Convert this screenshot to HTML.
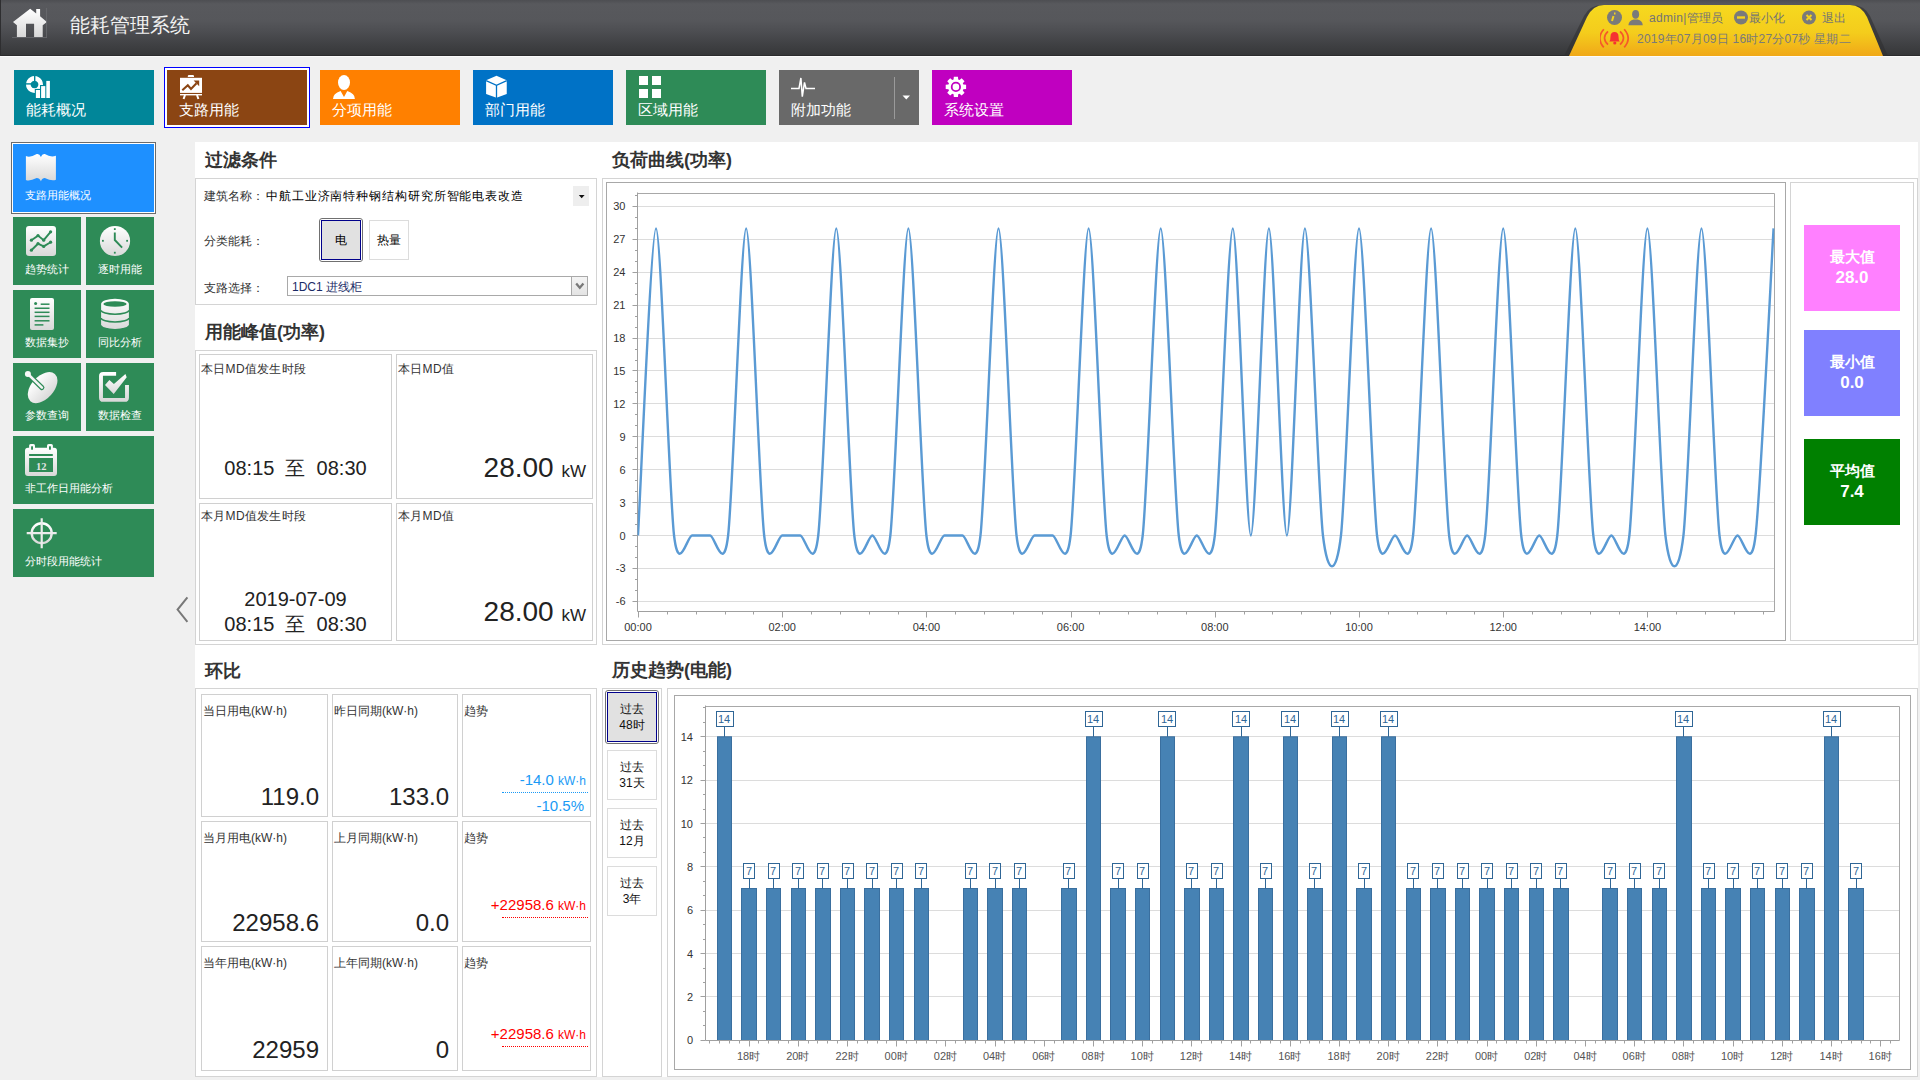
<!DOCTYPE html><html><head><meta charset="utf-8"><style>
html,body{margin:0;padding:0;width:1920px;height:1080px;overflow:hidden;background:#f0f0f0;font-family:"Liberation Sans", sans-serif;}
div{box-sizing:border-box;}
.t{position:absolute;white-space:nowrap;line-height:1;}
</style></head><body>
<div style="position:absolute;left:0px;top:0px;width:1920px;height:56px;background:linear-gradient(#4d4e52 0px,#58595d 4px,#56575b 20px,#4c4d51 32px,#3f4043 45px,#353638 56px);"></div>
<div style="position:absolute;left:0px;top:56px;width:1920px;height:1px;background:#fbfbfb;"></div>
<div style="position:absolute;left:0px;top:55px;width:1920px;height:1px;background:#2b2b2d;"></div>
<div style="position:absolute;left:0px;top:0px;width:1px;height:56px;background:#2e2e30;"></div>
<svg style="position:absolute;left:12px;top:7px" width="38" height="32" viewBox="0 0 38 32">
<defs><linearGradient id="hg" x1="0" y1="0" x2="0" y2="1"><stop offset="0" stop-color="#ffffff"/><stop offset="1" stop-color="#d8d8d8"/></linearGradient></defs>
<path d="M1,14.9 L18.2,1.85 L24.2,6.4 L24.2,2.1 L28.1,2.1 L28.1,9.36 L34.9,14.9 L30.7,18.3 L30.7,30 L22.1,30 L22.1,16.7 L14,16.7 L14,30 L4.9,30 L4.9,18.3 Z" fill="url(#hg)"/><path d="M34.5,1 L34.5,31 M0,30.5 L35,30.5" stroke="#6a6b6f" stroke-width="0.8" fill="none"/>
</svg>
<div style="position:absolute;left:70px;top:13px;white-space:nowrap;font-size:20px;color:#f2f2f2;line-height:24px;">能耗管理系统</div>
<svg style="position:absolute;left:1560px;top:0" width="340" height="56" viewBox="0 0 340 56">
<defs><linearGradient id="yg" x1="0" y1="0" x2="0" y2="1"><stop offset="0" stop-color="#f6d91f"/><stop offset="0.55" stop-color="#f4cc1c"/><stop offset="1" stop-color="#f0a818"/></linearGradient></defs>
<path d="M4,56 L24,16 Q30,5 42,5 L292,5 Q304,5 310,16 L328,56 Z" fill="#2e2f31" opacity="0.6"/>
<path d="M9,56 L27,17 Q33,5 44,5 L290,5 Q301,5 307,17 L323,56 Z" fill="url(#yg)"/>
</svg>
<svg style="position:absolute;left:1600px;top:8px" width="260" height="44" viewBox="0 0 260 44">
<circle cx="14.5" cy="9.5" r="7.5" fill="#7a7a7a"/>
<path d="M15.5,5.5 L14,5.5 M13.5,8 L12,13" stroke="#f4d21e" stroke-width="2" fill="none"/>
<ellipse cx="35.6" cy="6.3" rx="3.5" ry="4.4" fill="#7a7a7a"/>
<path d="M28.4,17.2 Q28.8,12.6 33.6,11.6 L37.6,11.6 Q42.4,12.6 42.8,17.2 Z" fill="#7a7a7a"/>
<circle cx="141" cy="9.5" r="7" fill="#7a7a7a"/>
<rect x="137" y="8.3" width="8" height="2.4" fill="#f4d21e"/>
<circle cx="209" cy="9.5" r="7" fill="#7a7a7a"/>
<path d="M206.5,7 L211.5,12 M211.5,7 L206.5,12" stroke="#f4d21e" stroke-width="2"/>
<path d="M3.8,21.2 Q-4.2,30.3 3.8,39.4 M8,23.4 Q1,30 8,36.6 M24.2,21.2 Q32.2,30.3 24.2,39.4 M20,23.4 Q27,30 20,36.6" stroke="#f6582a" stroke-width="1.7" fill="none"/>
<path d="M9.3,33.6 Q10.5,32.5 10.5,28.5 Q10.5,24 14.5,24 Q18.5,24 18.5,28.5 Q18.5,32.5 19.7,33.6 Z" fill="#f53232"/>
<circle cx="14.8" cy="35" r="1.6" fill="#f53232"/>
</svg>
<div style="position:absolute;left:1649px;top:11px;white-space:nowrap;font-size:12px;color:#747474;line-height:14px;letter-spacing:0.3px;">admin|管理员</div>
<div style="position:absolute;left:1749px;top:11px;white-space:nowrap;font-size:12px;color:#747474;line-height:14px;">最小化</div>
<div style="position:absolute;left:1822px;top:11px;white-space:nowrap;font-size:12px;color:#747474;line-height:14px;">退出</div>
<div style="position:absolute;left:1637px;top:32px;white-space:nowrap;font-size:12px;color:#7a7a7a;line-height:14px;letter-spacing:0.23px;">2019年07月09日 16时27分07秒 星期二</div>
<div style="position:absolute;left:14px;top:70px;width:140px;height:55px;background:#018699;"></div>
<div style="position:absolute;left:26px;top:101px;white-space:nowrap;font-size:15px;color:#ffffff;line-height:18px;">能耗概况</div>
<div style="position:absolute;left:164px;top:67px;width:146px;height:61px;border:1px solid #0000ff;"></div>
<div style="position:absolute;left:165px;top:68px;width:144px;height:59px;border:2px solid #ffffff;"></div>
<div style="position:absolute;left:167px;top:70px;width:140px;height:55px;background:#8B4513;"></div>
<div style="position:absolute;left:179px;top:101px;white-space:nowrap;font-size:15px;color:#ffffff;line-height:18px;">支路用能</div>
<div style="position:absolute;left:320px;top:70px;width:140px;height:55px;background:#FF8000;"></div>
<div style="position:absolute;left:332px;top:101px;white-space:nowrap;font-size:15px;color:#ffffff;line-height:18px;">分项用能</div>
<div style="position:absolute;left:473px;top:70px;width:140px;height:55px;background:#0072C6;"></div>
<div style="position:absolute;left:485px;top:101px;white-space:nowrap;font-size:15px;color:#ffffff;line-height:18px;">部门用能</div>
<div style="position:absolute;left:626px;top:70px;width:140px;height:55px;background:#2E8B57;"></div>
<div style="position:absolute;left:638px;top:101px;white-space:nowrap;font-size:15px;color:#ffffff;line-height:18px;">区域用能</div>
<div style="position:absolute;left:779px;top:70px;width:140px;height:55px;background:#696969;"></div>
<div style="position:absolute;left:791px;top:101px;white-space:nowrap;font-size:15px;color:#ffffff;line-height:18px;">附加功能</div>
<div style="position:absolute;left:932px;top:70px;width:140px;height:55px;background:#C000C0;"></div>
<div style="position:absolute;left:944px;top:101px;white-space:nowrap;font-size:15px;color:#ffffff;line-height:18px;">系统设置</div>
<svg style="position:absolute;left:25px;top:75px" width="26" height="26" viewBox="0 0 26 26"><path fill-rule="evenodd" fill="#fff" d="M9.5,1 A8.5,8.5 0 1 1 9.49,1 Z M9.5,5.7 A3.8,3.8 0 1 0 9.51,5.7 Z"/>
<rect x="9" y="0" width="1.4" height="6" fill="#018699"/><rect x="0" y="8.2" width="6" height="1.4" fill="#018699"/>
<g stroke="#018699" stroke-width="2.2" fill="#fff"><rect x="10.9" y="15" width="4.1" height="8"/><rect x="16.1" y="11.1" width="4.2" height="11.9"/><rect x="21.3" y="5.9" width="3.6" height="17.1"/></g>
<g fill="#fff"><rect x="10.9" y="15" width="4.1" height="8"/><rect x="16.1" y="11.1" width="4.2" height="11.9"/><rect x="21.3" y="5.9" width="3.6" height="17.1"/></g></svg>
<svg style="position:absolute;left:179px;top:74px" width="26" height="26" viewBox="0 0 26 26"><rect x="1" y="3.8" width="22" height="15.1" fill="#fff"/><path d="M8.8,3 L8.8,2 Q8.8,1 10,1 L13.8,1 Q15,1 15,2 L15,3 Z" fill="#fff"/>
<rect x="1" y="20" width="22" height="1.4" fill="#fff"/><path d="M6,21 L4.6,25 M18,21 L19.4,25" stroke="#fff" stroke-width="2"/>
<path d="M3.3,16.2 L8.8,11.3 L12,15 L17.5,9.2" stroke="#8B4513" stroke-width="2.1" fill="none"/><path d="M14.6,6.6 L20.2,6.6 L20.2,12.2 Z" fill="#8B4513"/></svg>
<svg style="position:absolute;left:332px;top:74px" width="26" height="26" viewBox="0 0 26 26"><ellipse cx="12" cy="8.5" rx="6" ry="7.5" fill="#fff"/><path d="M1,24.9 Q1,19.6 8.6,17.1 L12,23.1 L15.3,17.1 Q22.9,19.6 22.9,24.9 Z" fill="#fff"/></svg>
<svg style="position:absolute;left:485px;top:75px" width="26" height="26" viewBox="0 0 26 26"><path d="M11.5,0.8 L21.75,5.3 L21.75,18.9 L11.5,22.8 L1.1,18.9 L1.1,5.3 Z" fill="#fff"/>
<path d="M1.1,5.6 L11.5,10.4 L21.75,5.6 M11.5,10.4 L11.5,23" stroke="#0072C6" stroke-width="1.3" fill="none"/></svg>
<svg style="position:absolute;left:638px;top:76px" width="26" height="26" viewBox="0 0 26 26"><rect x="1" y="0" width="9" height="9" fill="#fff"/><rect x="14" y="0" width="9" height="9" fill="#fff"/><rect x="1" y="13" width="9" height="9" fill="#fff"/><rect x="14" y="13" width="9" height="9" fill="#fff"/></svg>
<svg style="position:absolute;left:790px;top:76px" width="26" height="26" viewBox="0 0 26 26"><path d="M1,12.45 L9,12.45 L10.9,2 L12.3,20.6 L14.5,6.4 L16,12.45 L25,12.45" stroke="#fff" stroke-width="1.5" fill="none" stroke-linejoin="miter"/></svg>
<svg style="position:absolute;left:944px;top:76px" width="26" height="26" viewBox="0 0 26 26"><path fill="#fff" d="M9.59,3.45 L9.83,0.71 L13.97,0.71 L14.21,3.45 L15.54,4.00 L17.65,2.23 L20.57,5.15 L18.80,7.26 L19.35,8.59 L22.09,8.83 L22.09,12.97 L19.35,13.21 L18.80,14.54 L20.57,16.65 L17.65,19.57 L15.54,17.80 L14.21,18.35 L13.97,21.09 L9.83,21.09 L9.59,18.35 L8.26,17.80 L6.15,19.57 L3.23,16.65 L5.00,14.54 L4.45,13.21 L1.71,12.97 L1.71,8.83 L4.45,8.59 L5.00,7.26 L3.23,5.15 L6.15,2.23 L8.26,4.00 Z"/><circle cx="11.9" cy="10.9" r="4.2" fill="none" stroke="#C000C0" stroke-width="1.8"/></svg>
<div style="position:absolute;left:894px;top:77px;width:1px;height:42px;background:#9a9a9a;"></div>
<svg style="position:absolute;left:902px;top:95px" width="9" height="6"><path d="M0.5,0.5 L8,0.5 L4.25,4.5 Z" fill="#fff"/></svg>
<div style="position:absolute;left:11px;top:142px;width:145px;height:72px;border:1px solid #6b6b6b;"></div>
<div style="position:absolute;left:12px;top:143px;width:143px;height:70px;border:1px solid #ffffff;"></div>
<div style="position:absolute;left:13px;top:144px;width:141px;height:68px;background:#1E90FF;"></div>
<div style="position:absolute;left:25px;top:188px;white-space:nowrap;font-size:11px;color:#fff;line-height:14px;">支路用能概况</div>
<div style="position:absolute;left:13px;top:217px;width:68px;height:68px;background:#2E8B57;"></div>
<div style="position:absolute;left:25px;top:262px;white-space:nowrap;font-size:11px;color:#fff;line-height:14px;">趋势统计</div>
<div style="position:absolute;left:86px;top:217px;width:68px;height:68px;background:#2E8B57;"></div>
<div style="position:absolute;left:98px;top:262px;white-space:nowrap;font-size:11px;color:#fff;line-height:14px;">逐时用能</div>
<div style="position:absolute;left:13px;top:290px;width:68px;height:68px;background:#2E8B57;"></div>
<div style="position:absolute;left:25px;top:335px;white-space:nowrap;font-size:11px;color:#fff;line-height:14px;">数据集抄</div>
<div style="position:absolute;left:86px;top:290px;width:68px;height:68px;background:#2E8B57;"></div>
<div style="position:absolute;left:98px;top:335px;white-space:nowrap;font-size:11px;color:#fff;line-height:14px;">同比分析</div>
<div style="position:absolute;left:13px;top:363px;width:68px;height:68px;background:#2E8B57;"></div>
<div style="position:absolute;left:25px;top:408px;white-space:nowrap;font-size:11px;color:#fff;line-height:14px;">参数查询</div>
<div style="position:absolute;left:86px;top:363px;width:68px;height:68px;background:#2E8B57;"></div>
<div style="position:absolute;left:98px;top:408px;white-space:nowrap;font-size:11px;color:#fff;line-height:14px;">数据检查</div>
<div style="position:absolute;left:13px;top:436px;width:141px;height:68px;background:#2E8B57;"></div>
<div style="position:absolute;left:25px;top:481px;white-space:nowrap;font-size:11px;color:#fff;line-height:14px;">非工作日用能分析</div>
<div style="position:absolute;left:13px;top:509px;width:141px;height:68px;background:#2E8B57;"></div>
<div style="position:absolute;left:25px;top:554px;white-space:nowrap;font-size:11px;color:#fff;line-height:14px;">分时段用能统计</div>
<svg style="position:absolute;left:20px;top:148px" width="42" height="42" viewBox="0 0 42 42"><defs><linearGradient id="book" x1="0" y1="0" x2="0" y2="1"><stop offset="0" stop-color="#ffffff"/><stop offset="1" stop-color="#d9d9d9"/></linearGradient></defs><path fill="url(#book)" d="M5.9,8 Q10,10 16.7,6.1 Q19.5,5.5 20.9,8.9 Q22.3,5.5 24.8,6.1 Q31,10 35.9,7.8 L35.9,31.7 Q32,33.5 24.8,30 Q22.3,30 20.9,33.3 Q19.5,30 16.7,30 Q9.5,33.5 5.9,31.9 Z"/></svg>
<svg style="position:absolute;left:20px;top:220px" width="42" height="42" viewBox="0 0 42 42"><defs><linearGradient id="trend" x1="0" y1="0" x2="0" y2="1"><stop offset="0" stop-color="#ffffff"/><stop offset="1" stop-color="#d9d9d9"/></linearGradient></defs><rect x="6" y="6" width="30" height="30" rx="3" fill="url(#trend)"/><path d="M11.4,20.2 L18,15.6 L23.7,20.2 L30.6,11.8 M11.4,30.2 L18,23.7 L23.7,26.4 L30.6,22.2" stroke="#2E8B57" stroke-width="1.9" fill="none"/><g fill="#2E8B57"><circle cx="11.4" cy="20.2" r="1.6"/><circle cx="18" cy="15.6" r="1.6"/><circle cx="23.7" cy="20.2" r="1.6"/><circle cx="30.6" cy="11.8" r="1.6"/><circle cx="11.4" cy="30.2" r="1.6"/><circle cx="18" cy="23.7" r="1.6"/><circle cx="23.7" cy="26.4" r="1.6"/><circle cx="30.6" cy="22.2" r="1.6"/></g></svg>
<svg style="position:absolute;left:95px;top:221px" width="42" height="42" viewBox="0 0 42 42"><defs><linearGradient id="clock" x1="0" y1="0" x2="0" y2="1"><stop offset="0" stop-color="#ffffff"/><stop offset="1" stop-color="#d9d9d9"/></linearGradient></defs><circle cx="20" cy="20" r="15.1" fill="url(#clock)"/><path d="M19.8,11.4 L19.8,19 L27.1,26.7" stroke="#2E8B57" stroke-width="1.9" fill="none"/><g fill="#2E8B57"><rect x="18.9" y="7.2" width="1.8" height="1.8"/><rect x="18.9" y="30.8" width="1.8" height="1.8"/><rect x="7" y="18.9" width="1.8" height="1.8"/><rect x="31.2" y="18.9" width="1.8" height="1.8"/></g></svg>
<svg style="position:absolute;left:20px;top:294px" width="42" height="42" viewBox="0 0 42 42"><defs><linearGradient id="doc" x1="0" y1="0" x2="0" y2="1"><stop offset="0" stop-color="#ffffff"/><stop offset="1" stop-color="#d9d9d9"/></linearGradient></defs><rect x="10" y="4" width="24" height="32" rx="2" fill="url(#doc)"/><g stroke="#2E8B57" stroke-width="1.5"><line x1="20.7" y1="10.2" x2="29.5" y2="10.2"/><line x1="14.6" y1="14.25" x2="29.5" y2="14.25"/><line x1="14.6" y1="18.3" x2="29.5" y2="18.3"/><line x1="14.6" y1="22.4" x2="29.5" y2="22.4"/><line x1="14.6" y1="26.8" x2="29.5" y2="26.8"/><line x1="14.6" y1="30.9" x2="23.4" y2="30.9"/></g><circle cx="15.6" cy="9.6" r="1.5" fill="#2E8B57"/></svg>
<svg style="position:absolute;left:95px;top:294px" width="42" height="42" viewBox="0 0 42 42"><defs><linearGradient id="db" x1="0" y1="0" x2="0" y2="1"><stop offset="0" stop-color="#ffffff"/><stop offset="1" stop-color="#d9d9d9"/></linearGradient></defs><path fill="url(#db)" d="M6.1,10 A13.9,5.2 0 0 1 33.9,10 L33.9,30.2 A13.9,4.8 0 0 1 6.1,30.2 Z"/><ellipse cx="20" cy="10" rx="11.7" ry="2.8" fill="#2E8B57"/><path d="M6.1,16.2 A13.9,4 0 0 0 33.9,16.2 M6.1,24 A13.9,4 0 0 0 33.9,24" stroke="#2E8B57" stroke-width="1.5" fill="none"/></svg>
<svg style="position:absolute;left:22px;top:366px" width="42" height="42" viewBox="0 0 42 42"><defs><linearGradient id="dish" x1="0" y1="0" x2="0" y2="1"><stop offset="0" stop-color="#ffffff"/><stop offset="1" stop-color="#d9d9d9"/></linearGradient></defs><ellipse cx="20.6" cy="21.6" rx="18.3" ry="11.2" transform="rotate(-48 20.6 21.6)" fill="url(#dish)"/><path d="M5.9,8 L19.9,21.6" stroke="#2E8B57" stroke-width="5" stroke-linecap="round"/><path d="M5.9,8 L19.9,21.6" stroke="#f4f4f4" stroke-width="2.6" stroke-linecap="round"/><circle cx="5.9" cy="8" r="3" fill="#f8f8f8"/></svg>
<svg style="position:absolute;left:95px;top:366px" width="42" height="42" viewBox="0 0 42 42"><defs><linearGradient id="chk" x1="0" y1="0" x2="0" y2="1"><stop offset="0" stop-color="#ffffff"/><stop offset="1" stop-color="#d9d9d9"/></linearGradient></defs><path d="M21.1,7.9 L8.2,7.9 Q6,7.9 6,10.1 L6,31.7 Q6,33.9 8.2,33.9 L29.8,33.9 Q32,33.9 32,31.7 L32,18.9" stroke="url(#chk)" stroke-width="3.9" fill="none"/><path fill="url(#chk)" d="M10,18.9 L14.4,14.1 L18.9,18.1 L30.4,8 L31.7,11.3 L18.7,28 Z"/><path d="M21.3,5.8 L17.6,9.9 M32.3,16.7 L29.6,19.4" stroke="#2E8B57" stroke-width="0"/></svg>
<svg style="position:absolute;left:20px;top:440px" width="42" height="42" viewBox="0 0 42 42"><defs><linearGradient id="cal" x1="0" y1="0" x2="0" y2="1"><stop offset="0" stop-color="#ffffff"/><stop offset="1" stop-color="#d9d9d9"/></linearGradient></defs><path fill="url(#cal)" fill-rule="evenodd" d="M8,7.8 L34,7.8 Q37,7.8 37,10.8 L37,32.9 Q37,35.9 34,35.9 L8,35.9 Q5,35.9 5,32.9 L5,10.8 Q5,7.8 8,7.8 Z M9.1,14.1 L32.8,14.1 L32.8,15.9 L9.1,15.9 Z M9.1,18.1 L33,18.1 L33,31.9 L9.1,31.9 Z"/><rect x="9.1" y="3.9" width="5.9" height="6.8" rx="1.6" fill="#fbfbfb"/><rect x="27" y="3.9" width="5.9" height="6.8" rx="1.6" fill="#fbfbfb"/><rect x="11.1" y="6.3" width="1.9" height="3.4" fill="#2E8B57"/><rect x="29" y="6.3" width="1.9" height="3.4" fill="#2E8B57"/><text x="21.2" y="29.8" text-anchor="middle" font-size="10.5" font-weight="bold" font-family="Liberation Serif" fill="#e4e4e4">12</text></svg>
<svg style="position:absolute;left:20px;top:512px" width="42" height="42" viewBox="0 0 42 42"><defs><linearGradient id="cross" x1="0" y1="0" x2="0" y2="1"><stop offset="0" stop-color="#ffffff"/><stop offset="1" stop-color="#d9d9d9"/></linearGradient></defs><circle cx="21.7" cy="21.2" r="10" stroke="url(#cross)" stroke-width="2.4" fill="none"/><path d="M21.7,6.2 L21.7,36.2 M6.7,21.2 L36.7,21.2" stroke="#ececec" stroke-width="2.2"/></svg>
<svg style="position:absolute;left:172px;top:594px" width="20" height="32"><path d="M15.4,3.3 L5.6,15.6 L15.4,27.8" stroke="#787878" stroke-width="2" fill="none"/></svg>
<div style="position:absolute;left:195px;top:142px;width:1723px;height:935px;background:#ffffff;"></div>
<div style="position:absolute;left:205px;top:149px;white-space:nowrap;font-size:18px;font-weight:bold;color:#333;line-height:22px;">过滤条件</div>
<div style="position:absolute;left:205px;top:321px;white-space:nowrap;font-size:18px;font-weight:bold;color:#333;line-height:22px;">用能峰值(功率)</div>
<div style="position:absolute;left:205px;top:660px;white-space:nowrap;font-size:18px;font-weight:bold;color:#333;line-height:22px;">环比</div>
<div style="position:absolute;left:612px;top:149px;white-space:nowrap;font-size:18px;font-weight:bold;color:#333;line-height:22px;">负荷曲线(功率)</div>
<div style="position:absolute;left:612px;top:659px;white-space:nowrap;font-size:18px;font-weight:bold;color:#333;line-height:22px;">历史趋势(电能)</div>
<div style="position:absolute;left:195px;top:178px;width:402px;height:127px;border:1px solid #d4d4d4;"></div>
<div style="position:absolute;left:204px;top:189px;white-space:nowrap;font-size:12px;color:#333;line-height:14px;">建筑名称：</div>
<div style="position:absolute;left:266px;top:189px;white-space:nowrap;font-size:12px;color:#000;line-height:14px;letter-spacing:0.9px;">中航工业济南特种钢结构研究所智能电表改造</div>
<div style="position:absolute;left:573px;top:186px;width:16px;height:20px;background:#eeeeee;"></div>
<svg style="position:absolute;left:578px;top:194px" width="8" height="6"><path d="M0.8,1 L6.6,1 L3.7,4.2 Z" fill="#111"/></svg>
<div style="position:absolute;left:204px;top:234px;white-space:nowrap;font-size:12px;color:#333;line-height:14px;">分类能耗：</div>
<div style="position:absolute;left:319px;top:218px;width:44px;height:44px;border:1px solid #707070;border-radius:3px;background:#fff;"></div>
<div style="position:absolute;left:321px;top:220px;width:40px;height:40px;border:1px solid #00008b;background:#e1e1e1;"></div>
<div style="position:absolute;left:319px;top:233px;white-space:nowrap;width:44px;text-align:center;font-size:12px;color:#000;line-height:14px;">电</div>
<div style="position:absolute;left:369px;top:220px;width:40px;height:40px;border:1px solid #dcdcdc;background:#fff;"></div>
<div style="position:absolute;left:369px;top:233px;white-space:nowrap;width:40px;text-align:center;font-size:12px;color:#000;line-height:14px;">热量</div>
<div style="position:absolute;left:204px;top:281px;white-space:nowrap;font-size:12px;color:#333;line-height:14px;">支路选择：</div>
<div style="position:absolute;left:287px;top:276px;width:301px;height:20px;border:1px solid #a9a9a9;background:#fff;"></div>
<div style="position:absolute;left:571px;top:277px;width:16px;height:18px;border-left:1px solid #a9a9a9;background:linear-gradient(#f4f4f4,#e4e4e4);"></div>
<svg style="position:absolute;left:575px;top:282px" width="10" height="9"><path d="M1.2,1.6 L4.8,5.8 L8.4,1.6" stroke="#787878" stroke-width="2.3" fill="none"/></svg>
<div style="position:absolute;left:292px;top:280px;white-space:nowrap;font-size:12px;color:#1a2a66;line-height:14px;">1DC1 进线柜</div>
<div style="position:absolute;left:195px;top:350px;width:402px;height:295px;border:1px solid #d4d4d4;"></div>
<div style="position:absolute;left:199px;top:354px;width:193px;height:145px;border:1px solid #d0d0d0;"></div>
<div style="position:absolute;left:396px;top:354px;width:197px;height:145px;border:1px solid #d0d0d0;"></div>
<div style="position:absolute;left:199px;top:503px;width:193px;height:138px;border:1px solid #d0d0d0;"></div>
<div style="position:absolute;left:396px;top:503px;width:197px;height:138px;border:1px solid #d0d0d0;"></div>
<div style="position:absolute;left:201px;top:362px;white-space:nowrap;font-size:12px;color:#333;line-height:14px;letter-spacing:0.3px;">本日MD值发生时段</div>
<div style="position:absolute;left:398px;top:362px;white-space:nowrap;font-size:12px;color:#333;line-height:14px;letter-spacing:0.3px;">本日MD值</div>
<div style="position:absolute;left:201px;top:509px;white-space:nowrap;font-size:12px;color:#333;line-height:14px;letter-spacing:0.3px;">本月MD值发生时段</div>
<div style="position:absolute;left:398px;top:509px;white-space:nowrap;font-size:12px;color:#333;line-height:14px;letter-spacing:0.3px;">本月MD值</div>
<div style="position:absolute;left:199px;top:457px;white-space:nowrap;width:193px;text-align:center;font-size:20px;color:#222;line-height:22px;">08:15&nbsp;&nbsp;至&nbsp;&nbsp;08:30</div>
<div style="position:absolute;left:199px;top:588px;white-space:nowrap;width:193px;text-align:center;font-size:20px;color:#222;line-height:22px;">2019-07-09</div>
<div style="position:absolute;left:199px;top:613px;white-space:nowrap;width:193px;text-align:center;font-size:20px;color:#222;line-height:22px;">08:15&nbsp;&nbsp;至&nbsp;&nbsp;08:30</div>
<div style="position:absolute;left:396px;top:453px;white-space:nowrap;width:190px;text-align:right;font-size:28px;color:#222;line-height:30px;">28.00 <span style="font-size:17px">kW</span></div>
<div style="position:absolute;left:396px;top:597px;white-space:nowrap;width:190px;text-align:right;font-size:28px;color:#222;line-height:30px;">28.00 <span style="font-size:17px">kW</span></div>
<div style="position:absolute;left:195px;top:688px;width:402px;height:389px;border:1px solid #d4d4d4;"></div>
<div style="position:absolute;left:201px;top:694px;width:127px;height:123px;border:1px solid #d0d0d0;"></div>
<div style="position:absolute;left:203px;top:704px;white-space:nowrap;font-size:12px;color:#333;line-height:14px;">当日用电(kW·h)</div>
<div style="position:absolute;left:332px;top:694px;width:126px;height:123px;border:1px solid #d0d0d0;"></div>
<div style="position:absolute;left:334px;top:704px;white-space:nowrap;font-size:12px;color:#333;line-height:14px;">昨日同期(kW·h)</div>
<div style="position:absolute;left:462px;top:694px;width:129px;height:123px;border:1px solid #d0d0d0;"></div>
<div style="position:absolute;left:464px;top:704px;white-space:nowrap;font-size:12px;color:#333;line-height:14px;">趋势</div>
<div style="position:absolute;left:201px;top:784px;white-space:nowrap;width:118px;text-align:right;font-size:24px;color:#222;line-height:26px;">119.0</div>
<div style="position:absolute;left:332px;top:784px;white-space:nowrap;width:117px;text-align:right;font-size:24px;color:#222;line-height:26px;">133.0</div>
<div style="position:absolute;left:201px;top:821px;width:127px;height:121px;border:1px solid #d0d0d0;"></div>
<div style="position:absolute;left:203px;top:831px;white-space:nowrap;font-size:12px;color:#333;line-height:14px;">当月用电(kW·h)</div>
<div style="position:absolute;left:332px;top:821px;width:126px;height:121px;border:1px solid #d0d0d0;"></div>
<div style="position:absolute;left:334px;top:831px;white-space:nowrap;font-size:12px;color:#333;line-height:14px;">上月同期(kW·h)</div>
<div style="position:absolute;left:462px;top:821px;width:129px;height:121px;border:1px solid #d0d0d0;"></div>
<div style="position:absolute;left:464px;top:831px;white-space:nowrap;font-size:12px;color:#333;line-height:14px;">趋势</div>
<div style="position:absolute;left:201px;top:910px;white-space:nowrap;width:118px;text-align:right;font-size:24px;color:#222;line-height:26px;">22958.6</div>
<div style="position:absolute;left:332px;top:910px;white-space:nowrap;width:117px;text-align:right;font-size:24px;color:#222;line-height:26px;">0.0</div>
<div style="position:absolute;left:201px;top:946px;width:127px;height:125px;border:1px solid #d0d0d0;"></div>
<div style="position:absolute;left:203px;top:956px;white-space:nowrap;font-size:12px;color:#333;line-height:14px;">当年用电(kW·h)</div>
<div style="position:absolute;left:332px;top:946px;width:126px;height:125px;border:1px solid #d0d0d0;"></div>
<div style="position:absolute;left:334px;top:956px;white-space:nowrap;font-size:12px;color:#333;line-height:14px;">上年同期(kW·h)</div>
<div style="position:absolute;left:462px;top:946px;width:129px;height:125px;border:1px solid #d0d0d0;"></div>
<div style="position:absolute;left:464px;top:956px;white-space:nowrap;font-size:12px;color:#333;line-height:14px;">趋势</div>
<div style="position:absolute;left:201px;top:1037px;white-space:nowrap;width:118px;text-align:right;font-size:24px;color:#222;line-height:26px;">22959</div>
<div style="position:absolute;left:332px;top:1037px;white-space:nowrap;width:117px;text-align:right;font-size:24px;color:#222;line-height:26px;">0</div>
<div style="position:absolute;left:462px;top:771px;white-space:nowrap;width:124px;text-align:right;font-size:15px;color:#1a9af5;line-height:17px;">-14.0 <span style="font-size:12px">kW·h</span></div>
<div style="position:absolute;left:502px;top:792px;width:86px;height:1px;border-top:1px dotted #1a9af5;"></div>
<div style="position:absolute;left:462px;top:797px;white-space:nowrap;width:122px;text-align:right;font-size:15px;color:#1a9af5;line-height:17px;">-10.5%</div>
<div style="position:absolute;left:462px;top:896px;white-space:nowrap;width:124px;text-align:right;font-size:15px;color:#ff0000;line-height:17px;">+22958.6 <span style="font-size:12px">kW·h</span></div>
<div style="position:absolute;left:502px;top:917px;width:86px;height:1px;border-top:1px dotted #ff0000;"></div>
<div style="position:absolute;left:462px;top:1025px;white-space:nowrap;width:124px;text-align:right;font-size:15px;color:#ff0000;line-height:17px;">+22958.6 <span style="font-size:12px">kW·h</span></div>
<div style="position:absolute;left:502px;top:1046px;width:86px;height:1px;border-top:1px dotted #ff0000;"></div>
<div style="position:absolute;left:602px;top:178px;width:1316px;height:467px;border:1px solid #d4d4d4;"></div>
<div style="position:absolute;left:606px;top:182px;width:1180px;height:459px;border:1px solid #a8a8a8;"></div>
<div style="position:absolute;left:1790px;top:182px;width:124px;height:459px;border:1px solid #d4d4d4;"></div>
<div style="position:absolute;left:1804px;top:225px;width:96px;height:86px;background:#FF80FF;"></div>
<div style="position:absolute;left:1804px;top:248px;white-space:nowrap;width:96px;text-align:center;font-size:15px;font-weight:bold;color:#fff;line-height:18px;">最大值</div>
<div style="position:absolute;left:1804px;top:268px;white-space:nowrap;width:96px;text-align:center;font-size:17px;font-weight:bold;color:#fff;line-height:20px;">28.0</div>
<div style="position:absolute;left:1804px;top:330px;width:96px;height:86px;background:#8080FF;"></div>
<div style="position:absolute;left:1804px;top:353px;white-space:nowrap;width:96px;text-align:center;font-size:15px;font-weight:bold;color:#fff;line-height:18px;">最小值</div>
<div style="position:absolute;left:1804px;top:373px;white-space:nowrap;width:96px;text-align:center;font-size:17px;font-weight:bold;color:#fff;line-height:20px;">0.0</div>
<div style="position:absolute;left:1804px;top:439px;width:96px;height:86px;background:#008000;"></div>
<div style="position:absolute;left:1804px;top:462px;white-space:nowrap;width:96px;text-align:center;font-size:15px;font-weight:bold;color:#fff;line-height:18px;">平均值</div>
<div style="position:absolute;left:1804px;top:482px;white-space:nowrap;width:96px;text-align:center;font-size:17px;font-weight:bold;color:#fff;line-height:20px;">7.4</div>
<svg style="position:absolute;left:0;top:0" width="1920" height="1080" viewBox="0 0 1920 1080">
<line x1="637.5" y1="601.5" x2="1774.5" y2="601.5" stroke="#dcdcdc" stroke-width="1"/>
<line x1="637.5" y1="568.5" x2="1774.5" y2="568.5" stroke="#dcdcdc" stroke-width="1"/>
<line x1="637.5" y1="535.5" x2="1774.5" y2="535.5" stroke="#dcdcdc" stroke-width="1"/>
<line x1="637.5" y1="502.5" x2="1774.5" y2="502.5" stroke="#dcdcdc" stroke-width="1"/>
<line x1="637.5" y1="469.5" x2="1774.5" y2="469.5" stroke="#dcdcdc" stroke-width="1"/>
<line x1="637.5" y1="436.5" x2="1774.5" y2="436.5" stroke="#dcdcdc" stroke-width="1"/>
<line x1="637.5" y1="403.5" x2="1774.5" y2="403.5" stroke="#dcdcdc" stroke-width="1"/>
<line x1="637.5" y1="370.5" x2="1774.5" y2="370.5" stroke="#dcdcdc" stroke-width="1"/>
<line x1="637.5" y1="338.5" x2="1774.5" y2="338.5" stroke="#dcdcdc" stroke-width="1"/>
<line x1="637.5" y1="305.5" x2="1774.5" y2="305.5" stroke="#dcdcdc" stroke-width="1"/>
<line x1="637.5" y1="272.5" x2="1774.5" y2="272.5" stroke="#dcdcdc" stroke-width="1"/>
<line x1="637.5" y1="239.5" x2="1774.5" y2="239.5" stroke="#dcdcdc" stroke-width="1"/>
<line x1="637.5" y1="206.5" x2="1774.5" y2="206.5" stroke="#dcdcdc" stroke-width="1"/>
<path d="M637.5,193.5 L1774.5,193.5 L1774.5,611.5" stroke="#a8a8a8" fill="none"/>
<path d="M637.5,192.5 L637.5,611.5 L1774.5,611.5" stroke="#a0a0a0" fill="none"/>
<line x1="632.5" y1="601.5" x2="637.5" y2="601.5" stroke="#a0a0a0"/>
<line x1="635.0" y1="590.5" x2="637.5" y2="590.5" stroke="#a0a0a0"/>
<line x1="635.0" y1="579.5" x2="637.5" y2="579.5" stroke="#a0a0a0"/>
<line x1="632.5" y1="568.5" x2="637.5" y2="568.5" stroke="#a0a0a0"/>
<line x1="635.0" y1="557.5" x2="637.5" y2="557.5" stroke="#a0a0a0"/>
<line x1="635.0" y1="546.5" x2="637.5" y2="546.5" stroke="#a0a0a0"/>
<line x1="632.5" y1="535.5" x2="637.5" y2="535.5" stroke="#a0a0a0"/>
<line x1="635.0" y1="524.5" x2="637.5" y2="524.5" stroke="#a0a0a0"/>
<line x1="635.0" y1="513.5" x2="637.5" y2="513.5" stroke="#a0a0a0"/>
<line x1="632.5" y1="502.5" x2="637.5" y2="502.5" stroke="#a0a0a0"/>
<line x1="635.0" y1="491.5" x2="637.5" y2="491.5" stroke="#a0a0a0"/>
<line x1="635.0" y1="480.5" x2="637.5" y2="480.5" stroke="#a0a0a0"/>
<line x1="632.5" y1="469.5" x2="637.5" y2="469.5" stroke="#a0a0a0"/>
<line x1="635.0" y1="458.5" x2="637.5" y2="458.5" stroke="#a0a0a0"/>
<line x1="635.0" y1="447.5" x2="637.5" y2="447.5" stroke="#a0a0a0"/>
<line x1="632.5" y1="436.5" x2="637.5" y2="436.5" stroke="#a0a0a0"/>
<line x1="635.0" y1="425.5" x2="637.5" y2="425.5" stroke="#a0a0a0"/>
<line x1="635.0" y1="414.5" x2="637.5" y2="414.5" stroke="#a0a0a0"/>
<line x1="632.5" y1="403.5" x2="637.5" y2="403.5" stroke="#a0a0a0"/>
<line x1="635.0" y1="392.5" x2="637.5" y2="392.5" stroke="#a0a0a0"/>
<line x1="635.0" y1="381.5" x2="637.5" y2="381.5" stroke="#a0a0a0"/>
<line x1="632.5" y1="370.5" x2="637.5" y2="370.5" stroke="#a0a0a0"/>
<line x1="635.0" y1="360.5" x2="637.5" y2="360.5" stroke="#a0a0a0"/>
<line x1="635.0" y1="349.5" x2="637.5" y2="349.5" stroke="#a0a0a0"/>
<line x1="632.5" y1="338.5" x2="637.5" y2="338.5" stroke="#a0a0a0"/>
<line x1="635.0" y1="327.5" x2="637.5" y2="327.5" stroke="#a0a0a0"/>
<line x1="635.0" y1="316.5" x2="637.5" y2="316.5" stroke="#a0a0a0"/>
<line x1="632.5" y1="305.5" x2="637.5" y2="305.5" stroke="#a0a0a0"/>
<line x1="635.0" y1="294.5" x2="637.5" y2="294.5" stroke="#a0a0a0"/>
<line x1="635.0" y1="283.5" x2="637.5" y2="283.5" stroke="#a0a0a0"/>
<line x1="632.5" y1="272.5" x2="637.5" y2="272.5" stroke="#a0a0a0"/>
<line x1="635.0" y1="261.5" x2="637.5" y2="261.5" stroke="#a0a0a0"/>
<line x1="635.0" y1="250.5" x2="637.5" y2="250.5" stroke="#a0a0a0"/>
<line x1="632.5" y1="239.5" x2="637.5" y2="239.5" stroke="#a0a0a0"/>
<line x1="635.0" y1="228.5" x2="637.5" y2="228.5" stroke="#a0a0a0"/>
<line x1="635.0" y1="217.5" x2="637.5" y2="217.5" stroke="#a0a0a0"/>
<line x1="632.5" y1="206.5" x2="637.5" y2="206.5" stroke="#a0a0a0"/>
<line x1="635.0" y1="195.5" x2="637.5" y2="195.5" stroke="#a0a0a0"/>
<text x="625.5" y="605.302" text-anchor="end" font-size="11" fill="#333" font-family="Liberation Sans">-6</text>
<text x="625.5" y="572.401" text-anchor="end" font-size="11" fill="#333" font-family="Liberation Sans">-3</text>
<text x="625.5" y="539.5" text-anchor="end" font-size="11" fill="#333" font-family="Liberation Sans">0</text>
<text x="625.5" y="506.599" text-anchor="end" font-size="11" fill="#333" font-family="Liberation Sans">3</text>
<text x="625.5" y="473.698" text-anchor="end" font-size="11" fill="#333" font-family="Liberation Sans">6</text>
<text x="625.5" y="440.797" text-anchor="end" font-size="11" fill="#333" font-family="Liberation Sans">9</text>
<text x="625.5" y="407.89599999999996" text-anchor="end" font-size="11" fill="#333" font-family="Liberation Sans">12</text>
<text x="625.5" y="374.995" text-anchor="end" font-size="11" fill="#333" font-family="Liberation Sans">15</text>
<text x="625.5" y="342.094" text-anchor="end" font-size="11" fill="#333" font-family="Liberation Sans">18</text>
<text x="625.5" y="309.193" text-anchor="end" font-size="11" fill="#333" font-family="Liberation Sans">21</text>
<text x="625.5" y="276.292" text-anchor="end" font-size="11" fill="#333" font-family="Liberation Sans">24</text>
<text x="625.5" y="243.39099999999996" text-anchor="end" font-size="11" fill="#333" font-family="Liberation Sans">27</text>
<text x="625.5" y="210.49" text-anchor="end" font-size="11" fill="#333" font-family="Liberation Sans">30</text>
<line x1="638.5" y1="611.5" x2="638.5" y2="617.5" stroke="#a0a0a0"/>
<text x="638.0" y="631" text-anchor="middle" font-size="11" fill="#333" font-family="Liberation Sans">00:00</text>
<line x1="667.5" y1="611.5" x2="667.5" y2="614.5" stroke="#a0a0a0"/>
<line x1="696.5" y1="611.5" x2="696.5" y2="614.5" stroke="#a0a0a0"/>
<line x1="725.5" y1="611.5" x2="725.5" y2="614.5" stroke="#a0a0a0"/>
<line x1="753.5" y1="611.5" x2="753.5" y2="614.5" stroke="#a0a0a0"/>
<line x1="782.5" y1="611.5" x2="782.5" y2="617.5" stroke="#a0a0a0"/>
<text x="782.2" y="631" text-anchor="middle" font-size="11" fill="#333" font-family="Liberation Sans">02:00</text>
<line x1="811.5" y1="611.5" x2="811.5" y2="614.5" stroke="#a0a0a0"/>
<line x1="840.5" y1="611.5" x2="840.5" y2="614.5" stroke="#a0a0a0"/>
<line x1="869.5" y1="611.5" x2="869.5" y2="614.5" stroke="#a0a0a0"/>
<line x1="898.5" y1="611.5" x2="898.5" y2="614.5" stroke="#a0a0a0"/>
<line x1="926.5" y1="611.5" x2="926.5" y2="617.5" stroke="#a0a0a0"/>
<text x="926.4000000000001" y="631" text-anchor="middle" font-size="11" fill="#333" font-family="Liberation Sans">04:00</text>
<line x1="955.5" y1="611.5" x2="955.5" y2="614.5" stroke="#a0a0a0"/>
<line x1="984.5" y1="611.5" x2="984.5" y2="614.5" stroke="#a0a0a0"/>
<line x1="1013.5" y1="611.5" x2="1013.5" y2="614.5" stroke="#a0a0a0"/>
<line x1="1042.5" y1="611.5" x2="1042.5" y2="614.5" stroke="#a0a0a0"/>
<line x1="1071.5" y1="611.5" x2="1071.5" y2="617.5" stroke="#a0a0a0"/>
<text x="1070.6" y="631" text-anchor="middle" font-size="11" fill="#333" font-family="Liberation Sans">06:00</text>
<line x1="1099.5" y1="611.5" x2="1099.5" y2="614.5" stroke="#a0a0a0"/>
<line x1="1128.5" y1="611.5" x2="1128.5" y2="614.5" stroke="#a0a0a0"/>
<line x1="1157.5" y1="611.5" x2="1157.5" y2="614.5" stroke="#a0a0a0"/>
<line x1="1186.5" y1="611.5" x2="1186.5" y2="614.5" stroke="#a0a0a0"/>
<line x1="1215.5" y1="611.5" x2="1215.5" y2="617.5" stroke="#a0a0a0"/>
<text x="1214.8000000000002" y="631" text-anchor="middle" font-size="11" fill="#333" font-family="Liberation Sans">08:00</text>
<line x1="1244.5" y1="611.5" x2="1244.5" y2="614.5" stroke="#a0a0a0"/>
<line x1="1272.5" y1="611.5" x2="1272.5" y2="614.5" stroke="#a0a0a0"/>
<line x1="1301.5" y1="611.5" x2="1301.5" y2="614.5" stroke="#a0a0a0"/>
<line x1="1330.5" y1="611.5" x2="1330.5" y2="614.5" stroke="#a0a0a0"/>
<line x1="1359.5" y1="611.5" x2="1359.5" y2="617.5" stroke="#a0a0a0"/>
<text x="1359.0" y="631" text-anchor="middle" font-size="11" fill="#333" font-family="Liberation Sans">10:00</text>
<line x1="1388.5" y1="611.5" x2="1388.5" y2="614.5" stroke="#a0a0a0"/>
<line x1="1417.5" y1="611.5" x2="1417.5" y2="614.5" stroke="#a0a0a0"/>
<line x1="1446.5" y1="611.5" x2="1446.5" y2="614.5" stroke="#a0a0a0"/>
<line x1="1474.5" y1="611.5" x2="1474.5" y2="614.5" stroke="#a0a0a0"/>
<line x1="1503.5" y1="611.5" x2="1503.5" y2="617.5" stroke="#a0a0a0"/>
<text x="1503.2" y="631" text-anchor="middle" font-size="11" fill="#333" font-family="Liberation Sans">12:00</text>
<line x1="1532.5" y1="611.5" x2="1532.5" y2="614.5" stroke="#a0a0a0"/>
<line x1="1561.5" y1="611.5" x2="1561.5" y2="614.5" stroke="#a0a0a0"/>
<line x1="1590.5" y1="611.5" x2="1590.5" y2="614.5" stroke="#a0a0a0"/>
<line x1="1619.5" y1="611.5" x2="1619.5" y2="614.5" stroke="#a0a0a0"/>
<line x1="1647.5" y1="611.5" x2="1647.5" y2="617.5" stroke="#a0a0a0"/>
<text x="1647.4" y="631" text-anchor="middle" font-size="11" fill="#333" font-family="Liberation Sans">14:00</text>
<line x1="1676.5" y1="611.5" x2="1676.5" y2="614.5" stroke="#a0a0a0"/>
<line x1="1705.5" y1="611.5" x2="1705.5" y2="614.5" stroke="#a0a0a0"/>
<line x1="1734.5" y1="611.5" x2="1734.5" y2="614.5" stroke="#a0a0a0"/>
<line x1="1763.5" y1="611.5" x2="1763.5" y2="614.5" stroke="#a0a0a0"/>
<clipPath id="lcclip"><rect x="637.5" y="193.5" width="1137.0" height="418.0"/></clipPath>
<path d="M638.00,535.50 C640.40,494.56 651.22,228.42 656.02,228.42 C660.83,228.42 669.24,494.56 674.05,535.50 C678.86,576.44 687.27,535.50 692.08,535.50 C696.88,535.50 705.29,535.50 710.10,535.50 C714.91,535.50 723.32,576.44 728.12,535.50 C732.93,494.56 741.34,228.42 746.15,228.42 C750.96,228.42 759.37,494.56 764.17,535.50 C768.98,576.44 777.39,535.50 782.20,535.50 C787.01,535.50 795.42,535.50 800.23,535.50 C805.03,535.50 813.44,576.44 818.25,535.50 C823.06,494.56 831.47,228.42 836.27,228.42 C841.08,228.42 849.49,494.56 854.30,535.50 C859.11,576.44 867.52,535.50 872.33,535.50 C877.13,535.50 885.54,576.44 890.35,535.50 C895.16,494.56 903.57,228.42 908.38,228.42 C913.18,228.42 921.59,494.56 926.40,535.50 C931.21,576.44 939.62,535.50 944.42,535.50 C949.23,535.50 957.64,535.50 962.45,535.50 C967.26,535.50 975.67,576.44 980.47,535.50 C985.28,494.56 993.69,228.42 998.50,228.42 C1003.31,228.42 1011.72,494.56 1016.52,535.50 C1021.33,576.44 1029.74,535.50 1034.55,535.50 C1039.36,535.50 1047.77,535.50 1052.58,535.50 C1057.38,535.50 1065.79,576.44 1070.60,535.50 C1075.41,494.56 1083.82,228.42 1088.62,228.42 C1093.43,228.42 1101.84,494.56 1106.65,535.50 C1111.46,576.44 1119.87,535.50 1124.67,535.50 C1129.48,535.50 1137.89,576.44 1142.70,535.50 C1147.51,494.56 1155.92,228.42 1160.72,228.42 C1165.53,228.42 1173.94,494.56 1178.75,535.50 C1183.56,576.44 1191.97,535.50 1196.78,535.50 C1201.58,535.50 1209.99,576.44 1214.80,535.50 C1219.61,494.56 1228.02,228.42 1232.82,228.42 C1237.63,228.42 1246.04,535.50 1250.85,535.50 C1255.66,535.50 1264.07,228.42 1268.88,228.42 C1273.68,228.42 1282.09,535.50 1286.90,535.50 C1291.71,535.50 1300.12,228.42 1304.92,228.42 C1309.73,228.42 1318.14,494.56 1322.95,535.50 C1327.76,576.44 1336.17,576.44 1340.97,535.50 C1345.78,494.56 1354.19,228.42 1359.00,228.42 C1363.81,228.42 1372.22,494.56 1377.03,535.50 C1381.83,576.44 1390.24,535.50 1395.05,535.50 C1399.86,535.50 1408.27,576.44 1413.07,535.50 C1417.88,494.56 1426.29,228.42 1431.10,228.42 C1435.91,228.42 1444.32,494.56 1449.12,535.50 C1453.93,576.44 1462.34,535.50 1467.15,535.50 C1471.96,535.50 1480.37,576.44 1485.17,535.50 C1489.98,494.56 1498.39,228.42 1503.20,228.42 C1508.01,228.42 1516.42,494.56 1521.22,535.50 C1526.03,576.44 1534.44,535.50 1539.25,535.50 C1544.06,535.50 1552.47,576.44 1557.28,535.50 C1562.08,494.56 1570.49,228.42 1575.30,228.42 C1580.11,228.42 1588.52,494.56 1593.32,535.50 C1598.13,576.44 1606.54,535.50 1611.35,535.50 C1616.16,535.50 1624.57,576.44 1629.38,535.50 C1634.18,494.56 1642.59,228.42 1647.40,228.42 C1652.21,228.42 1660.62,494.56 1665.42,535.50 C1670.23,576.44 1678.64,576.44 1683.45,535.50 C1688.26,494.56 1696.67,228.42 1701.47,228.42 C1706.28,228.42 1714.69,494.56 1719.50,535.50 C1724.31,576.44 1732.72,535.50 1737.52,535.50 C1742.33,535.50 1750.74,576.44 1755.55,535.50 C1760.36,494.56 1771.17,269.37 1773.57,228.42" stroke="#5a9ad4" stroke-width="2.4" fill="none" clip-path="url(#lcclip)"/>
</svg>
<div style="position:absolute;left:602px;top:688px;width:60px;height:389px;border:1px solid #d4d4d4;"></div>
<div style="position:absolute;left:605px;top:690px;width:54px;height:54px;border:1px solid #707070;border-radius:3px;background:#fff;"></div>
<div style="position:absolute;left:607px;top:692px;width:50px;height:50px;border:1px solid #00008b;background:#e1e1e1;"></div>
<div style="position:absolute;left:605px;top:701px;white-space:nowrap;width:54px;text-align:center;font-size:12px;color:#111;line-height:16px;">过去<br>48时</div>
<div style="position:absolute;left:607px;top:750px;width:50px;height:50px;border:1px solid #dcdcdc;"></div>
<div style="position:absolute;left:607px;top:759px;white-space:nowrap;width:50px;text-align:center;font-size:12px;color:#111;line-height:16px;">过去<br>31天</div>
<div style="position:absolute;left:607px;top:808px;width:50px;height:50px;border:1px solid #dcdcdc;"></div>
<div style="position:absolute;left:607px;top:817px;white-space:nowrap;width:50px;text-align:center;font-size:12px;color:#111;line-height:16px;">过去<br>12月</div>
<div style="position:absolute;left:607px;top:866px;width:50px;height:50px;border:1px solid #dcdcdc;"></div>
<div style="position:absolute;left:607px;top:875px;white-space:nowrap;width:50px;text-align:center;font-size:12px;color:#111;line-height:16px;">过去<br>3年</div>
<div style="position:absolute;left:667px;top:688px;width:1251px;height:389px;border:1px solid #d4d4d4;"></div>
<div style="position:absolute;left:674px;top:695px;width:1237px;height:375px;border:1px solid #a8a8a8;"></div>
<svg style="position:absolute;left:0;top:0" width="1920" height="1080" viewBox="0 0 1920 1080">
<line x1="705.5" y1="996.5" x2="1899.5" y2="996.5" stroke="#dcdcdc"/>
<line x1="705.5" y1="953.5" x2="1899.5" y2="953.5" stroke="#dcdcdc"/>
<line x1="705.5" y1="910.5" x2="1899.5" y2="910.5" stroke="#dcdcdc"/>
<line x1="705.5" y1="866.5" x2="1899.5" y2="866.5" stroke="#dcdcdc"/>
<line x1="705.5" y1="823.5" x2="1899.5" y2="823.5" stroke="#dcdcdc"/>
<line x1="705.5" y1="780.5" x2="1899.5" y2="780.5" stroke="#dcdcdc"/>
<line x1="705.5" y1="736.5" x2="1899.5" y2="736.5" stroke="#dcdcdc"/>
<path d="M705.5,706.5 L1899.5,706.5 L1899.5,1040.5" stroke="#a8a8a8" fill="none"/>
<line x1="700.5" y1="1040.5" x2="705.5" y2="1040.5" stroke="#a0a0a0"/>
<line x1="703.0" y1="1025.5" x2="705.5" y2="1025.5" stroke="#a0a0a0"/>
<line x1="703.0" y1="1011.5" x2="705.5" y2="1011.5" stroke="#a0a0a0"/>
<line x1="700.5" y1="996.5" x2="705.5" y2="996.5" stroke="#a0a0a0"/>
<line x1="703.0" y1="982.5" x2="705.5" y2="982.5" stroke="#a0a0a0"/>
<line x1="703.0" y1="968.5" x2="705.5" y2="968.5" stroke="#a0a0a0"/>
<line x1="700.5" y1="953.5" x2="705.5" y2="953.5" stroke="#a0a0a0"/>
<line x1="703.0" y1="939.5" x2="705.5" y2="939.5" stroke="#a0a0a0"/>
<line x1="703.0" y1="924.5" x2="705.5" y2="924.5" stroke="#a0a0a0"/>
<line x1="700.5" y1="910.5" x2="705.5" y2="910.5" stroke="#a0a0a0"/>
<line x1="703.0" y1="895.5" x2="705.5" y2="895.5" stroke="#a0a0a0"/>
<line x1="703.0" y1="881.5" x2="705.5" y2="881.5" stroke="#a0a0a0"/>
<line x1="700.5" y1="866.5" x2="705.5" y2="866.5" stroke="#a0a0a0"/>
<line x1="703.0" y1="852.5" x2="705.5" y2="852.5" stroke="#a0a0a0"/>
<line x1="703.0" y1="837.5" x2="705.5" y2="837.5" stroke="#a0a0a0"/>
<line x1="700.5" y1="823.5" x2="705.5" y2="823.5" stroke="#a0a0a0"/>
<line x1="703.0" y1="809.5" x2="705.5" y2="809.5" stroke="#a0a0a0"/>
<line x1="703.0" y1="794.5" x2="705.5" y2="794.5" stroke="#a0a0a0"/>
<line x1="700.5" y1="780.5" x2="705.5" y2="780.5" stroke="#a0a0a0"/>
<line x1="703.0" y1="765.5" x2="705.5" y2="765.5" stroke="#a0a0a0"/>
<line x1="703.0" y1="751.5" x2="705.5" y2="751.5" stroke="#a0a0a0"/>
<line x1="700.5" y1="736.5" x2="705.5" y2="736.5" stroke="#a0a0a0"/>
<line x1="703.0" y1="722.5" x2="705.5" y2="722.5" stroke="#a0a0a0"/>
<line x1="703.0" y1="707.5" x2="705.5" y2="707.5" stroke="#a0a0a0"/>
<text x="693" y="1044.3" text-anchor="end" font-size="11" fill="#333" font-family="Liberation Sans">0</text>
<text x="693" y="1000.9399999999999" text-anchor="end" font-size="11" fill="#333" font-family="Liberation Sans">2</text>
<text x="693" y="957.5799999999999" text-anchor="end" font-size="11" fill="#333" font-family="Liberation Sans">4</text>
<text x="693" y="914.22" text-anchor="end" font-size="11" fill="#333" font-family="Liberation Sans">6</text>
<text x="693" y="870.8599999999999" text-anchor="end" font-size="11" fill="#333" font-family="Liberation Sans">8</text>
<text x="693" y="827.5" text-anchor="end" font-size="11" fill="#333" font-family="Liberation Sans">10</text>
<text x="693" y="784.14" text-anchor="end" font-size="11" fill="#333" font-family="Liberation Sans">12</text>
<text x="693" y="740.78" text-anchor="end" font-size="11" fill="#333" font-family="Liberation Sans">14</text>
<line x1="709.5" y1="1040.5" x2="709.5" y2="1043.5" stroke="#a0a0a0"/>
<line x1="719.5" y1="1040.5" x2="719.5" y2="1043.5" stroke="#a0a0a0"/>
<line x1="729.5" y1="1040.5" x2="729.5" y2="1043.5" stroke="#a0a0a0"/>
<line x1="739.5" y1="1040.5" x2="739.5" y2="1043.5" stroke="#a0a0a0"/>
<line x1="749.5" y1="1040.5" x2="749.5" y2="1046.5" stroke="#a0a0a0"/>
<text x="748.6" y="1060" text-anchor="middle" font-size="11" fill="#555" font-family="Liberation Sans">18时</text>
<line x1="758.5" y1="1040.5" x2="758.5" y2="1043.5" stroke="#a0a0a0"/>
<line x1="768.5" y1="1040.5" x2="768.5" y2="1043.5" stroke="#a0a0a0"/>
<line x1="778.5" y1="1040.5" x2="778.5" y2="1043.5" stroke="#a0a0a0"/>
<line x1="788.5" y1="1040.5" x2="788.5" y2="1043.5" stroke="#a0a0a0"/>
<line x1="798.5" y1="1040.5" x2="798.5" y2="1046.5" stroke="#a0a0a0"/>
<text x="797.8" y="1060" text-anchor="middle" font-size="11" fill="#555" font-family="Liberation Sans">20时</text>
<line x1="808.5" y1="1040.5" x2="808.5" y2="1043.5" stroke="#a0a0a0"/>
<line x1="817.5" y1="1040.5" x2="817.5" y2="1043.5" stroke="#a0a0a0"/>
<line x1="827.5" y1="1040.5" x2="827.5" y2="1043.5" stroke="#a0a0a0"/>
<line x1="837.5" y1="1040.5" x2="837.5" y2="1043.5" stroke="#a0a0a0"/>
<line x1="847.5" y1="1040.5" x2="847.5" y2="1046.5" stroke="#a0a0a0"/>
<text x="847.0" y="1060" text-anchor="middle" font-size="11" fill="#555" font-family="Liberation Sans">22时</text>
<line x1="857.5" y1="1040.5" x2="857.5" y2="1043.5" stroke="#a0a0a0"/>
<line x1="867.5" y1="1040.5" x2="867.5" y2="1043.5" stroke="#a0a0a0"/>
<line x1="877.5" y1="1040.5" x2="877.5" y2="1043.5" stroke="#a0a0a0"/>
<line x1="886.5" y1="1040.5" x2="886.5" y2="1043.5" stroke="#a0a0a0"/>
<line x1="896.5" y1="1040.5" x2="896.5" y2="1046.5" stroke="#a0a0a0"/>
<text x="896.2" y="1060" text-anchor="middle" font-size="11" fill="#555" font-family="Liberation Sans">00时</text>
<line x1="906.5" y1="1040.5" x2="906.5" y2="1043.5" stroke="#a0a0a0"/>
<line x1="916.5" y1="1040.5" x2="916.5" y2="1043.5" stroke="#a0a0a0"/>
<line x1="926.5" y1="1040.5" x2="926.5" y2="1043.5" stroke="#a0a0a0"/>
<line x1="936.5" y1="1040.5" x2="936.5" y2="1043.5" stroke="#a0a0a0"/>
<line x1="945.5" y1="1040.5" x2="945.5" y2="1046.5" stroke="#a0a0a0"/>
<text x="945.4" y="1060" text-anchor="middle" font-size="11" fill="#555" font-family="Liberation Sans">02时</text>
<line x1="955.5" y1="1040.5" x2="955.5" y2="1043.5" stroke="#a0a0a0"/>
<line x1="965.5" y1="1040.5" x2="965.5" y2="1043.5" stroke="#a0a0a0"/>
<line x1="975.5" y1="1040.5" x2="975.5" y2="1043.5" stroke="#a0a0a0"/>
<line x1="985.5" y1="1040.5" x2="985.5" y2="1043.5" stroke="#a0a0a0"/>
<line x1="995.5" y1="1040.5" x2="995.5" y2="1046.5" stroke="#a0a0a0"/>
<text x="994.6" y="1060" text-anchor="middle" font-size="11" fill="#555" font-family="Liberation Sans">04时</text>
<line x1="1004.5" y1="1040.5" x2="1004.5" y2="1043.5" stroke="#a0a0a0"/>
<line x1="1014.5" y1="1040.5" x2="1014.5" y2="1043.5" stroke="#a0a0a0"/>
<line x1="1024.5" y1="1040.5" x2="1024.5" y2="1043.5" stroke="#a0a0a0"/>
<line x1="1034.5" y1="1040.5" x2="1034.5" y2="1043.5" stroke="#a0a0a0"/>
<line x1="1044.5" y1="1040.5" x2="1044.5" y2="1046.5" stroke="#a0a0a0"/>
<text x="1043.8" y="1060" text-anchor="middle" font-size="11" fill="#555" font-family="Liberation Sans">06时</text>
<line x1="1054.5" y1="1040.5" x2="1054.5" y2="1043.5" stroke="#a0a0a0"/>
<line x1="1063.5" y1="1040.5" x2="1063.5" y2="1043.5" stroke="#a0a0a0"/>
<line x1="1073.5" y1="1040.5" x2="1073.5" y2="1043.5" stroke="#a0a0a0"/>
<line x1="1083.5" y1="1040.5" x2="1083.5" y2="1043.5" stroke="#a0a0a0"/>
<line x1="1093.5" y1="1040.5" x2="1093.5" y2="1046.5" stroke="#a0a0a0"/>
<text x="1093.0" y="1060" text-anchor="middle" font-size="11" fill="#555" font-family="Liberation Sans">08时</text>
<line x1="1103.5" y1="1040.5" x2="1103.5" y2="1043.5" stroke="#a0a0a0"/>
<line x1="1113.5" y1="1040.5" x2="1113.5" y2="1043.5" stroke="#a0a0a0"/>
<line x1="1123.5" y1="1040.5" x2="1123.5" y2="1043.5" stroke="#a0a0a0"/>
<line x1="1132.5" y1="1040.5" x2="1132.5" y2="1043.5" stroke="#a0a0a0"/>
<line x1="1142.5" y1="1040.5" x2="1142.5" y2="1046.5" stroke="#a0a0a0"/>
<text x="1142.2" y="1060" text-anchor="middle" font-size="11" fill="#555" font-family="Liberation Sans">10时</text>
<line x1="1152.5" y1="1040.5" x2="1152.5" y2="1043.5" stroke="#a0a0a0"/>
<line x1="1162.5" y1="1040.5" x2="1162.5" y2="1043.5" stroke="#a0a0a0"/>
<line x1="1172.5" y1="1040.5" x2="1172.5" y2="1043.5" stroke="#a0a0a0"/>
<line x1="1182.5" y1="1040.5" x2="1182.5" y2="1043.5" stroke="#a0a0a0"/>
<line x1="1191.5" y1="1040.5" x2="1191.5" y2="1046.5" stroke="#a0a0a0"/>
<text x="1191.4" y="1060" text-anchor="middle" font-size="11" fill="#555" font-family="Liberation Sans">12时</text>
<line x1="1201.5" y1="1040.5" x2="1201.5" y2="1043.5" stroke="#a0a0a0"/>
<line x1="1211.5" y1="1040.5" x2="1211.5" y2="1043.5" stroke="#a0a0a0"/>
<line x1="1221.5" y1="1040.5" x2="1221.5" y2="1043.5" stroke="#a0a0a0"/>
<line x1="1231.5" y1="1040.5" x2="1231.5" y2="1043.5" stroke="#a0a0a0"/>
<line x1="1241.5" y1="1040.5" x2="1241.5" y2="1046.5" stroke="#a0a0a0"/>
<text x="1240.6" y="1060" text-anchor="middle" font-size="11" fill="#555" font-family="Liberation Sans">14时</text>
<line x1="1250.5" y1="1040.5" x2="1250.5" y2="1043.5" stroke="#a0a0a0"/>
<line x1="1260.5" y1="1040.5" x2="1260.5" y2="1043.5" stroke="#a0a0a0"/>
<line x1="1270.5" y1="1040.5" x2="1270.5" y2="1043.5" stroke="#a0a0a0"/>
<line x1="1280.5" y1="1040.5" x2="1280.5" y2="1043.5" stroke="#a0a0a0"/>
<line x1="1290.5" y1="1040.5" x2="1290.5" y2="1046.5" stroke="#a0a0a0"/>
<text x="1289.8000000000002" y="1060" text-anchor="middle" font-size="11" fill="#555" font-family="Liberation Sans">16时</text>
<line x1="1300.5" y1="1040.5" x2="1300.5" y2="1043.5" stroke="#a0a0a0"/>
<line x1="1309.5" y1="1040.5" x2="1309.5" y2="1043.5" stroke="#a0a0a0"/>
<line x1="1319.5" y1="1040.5" x2="1319.5" y2="1043.5" stroke="#a0a0a0"/>
<line x1="1329.5" y1="1040.5" x2="1329.5" y2="1043.5" stroke="#a0a0a0"/>
<line x1="1339.5" y1="1040.5" x2="1339.5" y2="1046.5" stroke="#a0a0a0"/>
<text x="1339.0" y="1060" text-anchor="middle" font-size="11" fill="#555" font-family="Liberation Sans">18时</text>
<line x1="1349.5" y1="1040.5" x2="1349.5" y2="1043.5" stroke="#a0a0a0"/>
<line x1="1359.5" y1="1040.5" x2="1359.5" y2="1043.5" stroke="#a0a0a0"/>
<line x1="1369.5" y1="1040.5" x2="1369.5" y2="1043.5" stroke="#a0a0a0"/>
<line x1="1378.5" y1="1040.5" x2="1378.5" y2="1043.5" stroke="#a0a0a0"/>
<line x1="1388.5" y1="1040.5" x2="1388.5" y2="1046.5" stroke="#a0a0a0"/>
<text x="1388.2" y="1060" text-anchor="middle" font-size="11" fill="#555" font-family="Liberation Sans">20时</text>
<line x1="1398.5" y1="1040.5" x2="1398.5" y2="1043.5" stroke="#a0a0a0"/>
<line x1="1408.5" y1="1040.5" x2="1408.5" y2="1043.5" stroke="#a0a0a0"/>
<line x1="1418.5" y1="1040.5" x2="1418.5" y2="1043.5" stroke="#a0a0a0"/>
<line x1="1428.5" y1="1040.5" x2="1428.5" y2="1043.5" stroke="#a0a0a0"/>
<line x1="1437.5" y1="1040.5" x2="1437.5" y2="1046.5" stroke="#a0a0a0"/>
<text x="1437.4" y="1060" text-anchor="middle" font-size="11" fill="#555" font-family="Liberation Sans">22时</text>
<line x1="1447.5" y1="1040.5" x2="1447.5" y2="1043.5" stroke="#a0a0a0"/>
<line x1="1457.5" y1="1040.5" x2="1457.5" y2="1043.5" stroke="#a0a0a0"/>
<line x1="1467.5" y1="1040.5" x2="1467.5" y2="1043.5" stroke="#a0a0a0"/>
<line x1="1477.5" y1="1040.5" x2="1477.5" y2="1043.5" stroke="#a0a0a0"/>
<line x1="1487.5" y1="1040.5" x2="1487.5" y2="1046.5" stroke="#a0a0a0"/>
<text x="1486.6" y="1060" text-anchor="middle" font-size="11" fill="#555" font-family="Liberation Sans">00时</text>
<line x1="1496.5" y1="1040.5" x2="1496.5" y2="1043.5" stroke="#a0a0a0"/>
<line x1="1506.5" y1="1040.5" x2="1506.5" y2="1043.5" stroke="#a0a0a0"/>
<line x1="1516.5" y1="1040.5" x2="1516.5" y2="1043.5" stroke="#a0a0a0"/>
<line x1="1526.5" y1="1040.5" x2="1526.5" y2="1043.5" stroke="#a0a0a0"/>
<line x1="1536.5" y1="1040.5" x2="1536.5" y2="1046.5" stroke="#a0a0a0"/>
<text x="1535.8000000000002" y="1060" text-anchor="middle" font-size="11" fill="#555" font-family="Liberation Sans">02时</text>
<line x1="1546.5" y1="1040.5" x2="1546.5" y2="1043.5" stroke="#a0a0a0"/>
<line x1="1555.5" y1="1040.5" x2="1555.5" y2="1043.5" stroke="#a0a0a0"/>
<line x1="1565.5" y1="1040.5" x2="1565.5" y2="1043.5" stroke="#a0a0a0"/>
<line x1="1575.5" y1="1040.5" x2="1575.5" y2="1043.5" stroke="#a0a0a0"/>
<line x1="1585.5" y1="1040.5" x2="1585.5" y2="1046.5" stroke="#a0a0a0"/>
<text x="1585.0" y="1060" text-anchor="middle" font-size="11" fill="#555" font-family="Liberation Sans">04时</text>
<line x1="1595.5" y1="1040.5" x2="1595.5" y2="1043.5" stroke="#a0a0a0"/>
<line x1="1605.5" y1="1040.5" x2="1605.5" y2="1043.5" stroke="#a0a0a0"/>
<line x1="1615.5" y1="1040.5" x2="1615.5" y2="1043.5" stroke="#a0a0a0"/>
<line x1="1624.5" y1="1040.5" x2="1624.5" y2="1043.5" stroke="#a0a0a0"/>
<line x1="1634.5" y1="1040.5" x2="1634.5" y2="1046.5" stroke="#a0a0a0"/>
<text x="1634.2" y="1060" text-anchor="middle" font-size="11" fill="#555" font-family="Liberation Sans">06时</text>
<line x1="1644.5" y1="1040.5" x2="1644.5" y2="1043.5" stroke="#a0a0a0"/>
<line x1="1654.5" y1="1040.5" x2="1654.5" y2="1043.5" stroke="#a0a0a0"/>
<line x1="1664.5" y1="1040.5" x2="1664.5" y2="1043.5" stroke="#a0a0a0"/>
<line x1="1674.5" y1="1040.5" x2="1674.5" y2="1043.5" stroke="#a0a0a0"/>
<line x1="1683.5" y1="1040.5" x2="1683.5" y2="1046.5" stroke="#a0a0a0"/>
<text x="1683.4" y="1060" text-anchor="middle" font-size="11" fill="#555" font-family="Liberation Sans">08时</text>
<line x1="1693.5" y1="1040.5" x2="1693.5" y2="1043.5" stroke="#a0a0a0"/>
<line x1="1703.5" y1="1040.5" x2="1703.5" y2="1043.5" stroke="#a0a0a0"/>
<line x1="1713.5" y1="1040.5" x2="1713.5" y2="1043.5" stroke="#a0a0a0"/>
<line x1="1723.5" y1="1040.5" x2="1723.5" y2="1043.5" stroke="#a0a0a0"/>
<line x1="1733.5" y1="1040.5" x2="1733.5" y2="1046.5" stroke="#a0a0a0"/>
<text x="1732.6" y="1060" text-anchor="middle" font-size="11" fill="#555" font-family="Liberation Sans">10时</text>
<line x1="1742.5" y1="1040.5" x2="1742.5" y2="1043.5" stroke="#a0a0a0"/>
<line x1="1752.5" y1="1040.5" x2="1752.5" y2="1043.5" stroke="#a0a0a0"/>
<line x1="1762.5" y1="1040.5" x2="1762.5" y2="1043.5" stroke="#a0a0a0"/>
<line x1="1772.5" y1="1040.5" x2="1772.5" y2="1043.5" stroke="#a0a0a0"/>
<line x1="1782.5" y1="1040.5" x2="1782.5" y2="1046.5" stroke="#a0a0a0"/>
<text x="1781.8" y="1060" text-anchor="middle" font-size="11" fill="#555" font-family="Liberation Sans">12时</text>
<line x1="1792.5" y1="1040.5" x2="1792.5" y2="1043.5" stroke="#a0a0a0"/>
<line x1="1801.5" y1="1040.5" x2="1801.5" y2="1043.5" stroke="#a0a0a0"/>
<line x1="1811.5" y1="1040.5" x2="1811.5" y2="1043.5" stroke="#a0a0a0"/>
<line x1="1821.5" y1="1040.5" x2="1821.5" y2="1043.5" stroke="#a0a0a0"/>
<line x1="1831.5" y1="1040.5" x2="1831.5" y2="1046.5" stroke="#a0a0a0"/>
<text x="1831.0" y="1060" text-anchor="middle" font-size="11" fill="#555" font-family="Liberation Sans">14时</text>
<line x1="1841.5" y1="1040.5" x2="1841.5" y2="1043.5" stroke="#a0a0a0"/>
<line x1="1851.5" y1="1040.5" x2="1851.5" y2="1043.5" stroke="#a0a0a0"/>
<line x1="1861.5" y1="1040.5" x2="1861.5" y2="1043.5" stroke="#a0a0a0"/>
<line x1="1870.5" y1="1040.5" x2="1870.5" y2="1043.5" stroke="#a0a0a0"/>
<line x1="1880.5" y1="1040.5" x2="1880.5" y2="1046.5" stroke="#a0a0a0"/>
<text x="1880.2" y="1060" text-anchor="middle" font-size="11" fill="#555" font-family="Liberation Sans">16时</text>
<line x1="1890.5" y1="1040.5" x2="1890.5" y2="1043.5" stroke="#a0a0a0"/>
<rect x="717.5" y="736.8" width="14" height="303.7" fill="#4682b4" stroke="#3a6f9f" stroke-width="1"/>
<line x1="724.5" y1="726.5" x2="724.5" y2="736.78" stroke="#2f6696"/>
<rect x="716.5" y="711.5" width="17" height="15" fill="#fff" stroke="#2f6696"/>
<text x="724.0" y="722.5" text-anchor="middle" font-size="11" fill="#2f6696" font-family="Liberation Sans">14</text>
<rect x="741.5" y="888.5" width="15" height="152.0" fill="#4682b4" stroke="#3a6f9f" stroke-width="1"/>
<line x1="749.5" y1="878.5" x2="749.5" y2="888.54" stroke="#2f6696"/>
<rect x="743.5" y="863.5" width="11" height="15" fill="#fff" stroke="#2f6696"/>
<text x="749.0" y="874.5" text-anchor="middle" font-size="11" fill="#2f6696" font-family="Liberation Sans">7</text>
<rect x="766.5" y="888.5" width="14" height="152.0" fill="#4682b4" stroke="#3a6f9f" stroke-width="1"/>
<line x1="773.5" y1="878.5" x2="773.5" y2="888.54" stroke="#2f6696"/>
<rect x="768.5" y="863.5" width="11" height="15" fill="#fff" stroke="#2f6696"/>
<text x="773.0" y="874.5" text-anchor="middle" font-size="11" fill="#2f6696" font-family="Liberation Sans">7</text>
<rect x="791.5" y="888.5" width="14" height="152.0" fill="#4682b4" stroke="#3a6f9f" stroke-width="1"/>
<line x1="798.5" y1="878.5" x2="798.5" y2="888.54" stroke="#2f6696"/>
<rect x="792.5" y="863.5" width="11" height="15" fill="#fff" stroke="#2f6696"/>
<text x="798.0" y="874.5" text-anchor="middle" font-size="11" fill="#2f6696" font-family="Liberation Sans">7</text>
<rect x="815.5" y="888.5" width="15" height="152.0" fill="#4682b4" stroke="#3a6f9f" stroke-width="1"/>
<line x1="822.5" y1="878.5" x2="822.5" y2="888.54" stroke="#2f6696"/>
<rect x="817.5" y="863.5" width="11" height="15" fill="#fff" stroke="#2f6696"/>
<text x="822.0" y="874.5" text-anchor="middle" font-size="11" fill="#2f6696" font-family="Liberation Sans">7</text>
<rect x="840.5" y="888.5" width="14" height="152.0" fill="#4682b4" stroke="#3a6f9f" stroke-width="1"/>
<line x1="847.5" y1="878.5" x2="847.5" y2="888.54" stroke="#2f6696"/>
<rect x="842.5" y="863.5" width="11" height="15" fill="#fff" stroke="#2f6696"/>
<text x="847.0" y="874.5" text-anchor="middle" font-size="11" fill="#2f6696" font-family="Liberation Sans">7</text>
<rect x="864.5" y="888.5" width="15" height="152.0" fill="#4682b4" stroke="#3a6f9f" stroke-width="1"/>
<line x1="872.5" y1="878.5" x2="872.5" y2="888.54" stroke="#2f6696"/>
<rect x="866.5" y="863.5" width="11" height="15" fill="#fff" stroke="#2f6696"/>
<text x="872.0" y="874.5" text-anchor="middle" font-size="11" fill="#2f6696" font-family="Liberation Sans">7</text>
<rect x="889.5" y="888.5" width="14" height="152.0" fill="#4682b4" stroke="#3a6f9f" stroke-width="1"/>
<line x1="896.5" y1="878.5" x2="896.5" y2="888.54" stroke="#2f6696"/>
<rect x="891.5" y="863.5" width="11" height="15" fill="#fff" stroke="#2f6696"/>
<text x="896.0" y="874.5" text-anchor="middle" font-size="11" fill="#2f6696" font-family="Liberation Sans">7</text>
<rect x="914.5" y="888.5" width="14" height="152.0" fill="#4682b4" stroke="#3a6f9f" stroke-width="1"/>
<line x1="921.5" y1="878.5" x2="921.5" y2="888.54" stroke="#2f6696"/>
<rect x="915.5" y="863.5" width="11" height="15" fill="#fff" stroke="#2f6696"/>
<text x="921.0" y="874.5" text-anchor="middle" font-size="11" fill="#2f6696" font-family="Liberation Sans">7</text>
<rect x="963.5" y="888.5" width="14" height="152.0" fill="#4682b4" stroke="#3a6f9f" stroke-width="1"/>
<line x1="970.5" y1="878.5" x2="970.5" y2="888.54" stroke="#2f6696"/>
<rect x="965.5" y="863.5" width="11" height="15" fill="#fff" stroke="#2f6696"/>
<text x="970.0" y="874.5" text-anchor="middle" font-size="11" fill="#2f6696" font-family="Liberation Sans">7</text>
<rect x="987.5" y="888.5" width="15" height="152.0" fill="#4682b4" stroke="#3a6f9f" stroke-width="1"/>
<line x1="995.5" y1="878.5" x2="995.5" y2="888.54" stroke="#2f6696"/>
<rect x="989.5" y="863.5" width="11" height="15" fill="#fff" stroke="#2f6696"/>
<text x="995.0" y="874.5" text-anchor="middle" font-size="11" fill="#2f6696" font-family="Liberation Sans">7</text>
<rect x="1012.5" y="888.5" width="14" height="152.0" fill="#4682b4" stroke="#3a6f9f" stroke-width="1"/>
<line x1="1019.5" y1="878.5" x2="1019.5" y2="888.54" stroke="#2f6696"/>
<rect x="1014.5" y="863.5" width="11" height="15" fill="#fff" stroke="#2f6696"/>
<text x="1019.0" y="874.5" text-anchor="middle" font-size="11" fill="#2f6696" font-family="Liberation Sans">7</text>
<rect x="1061.5" y="888.5" width="15" height="152.0" fill="#4682b4" stroke="#3a6f9f" stroke-width="1"/>
<line x1="1068.5" y1="878.5" x2="1068.5" y2="888.54" stroke="#2f6696"/>
<rect x="1063.5" y="863.5" width="11" height="15" fill="#fff" stroke="#2f6696"/>
<text x="1068.0" y="874.5" text-anchor="middle" font-size="11" fill="#2f6696" font-family="Liberation Sans">7</text>
<rect x="1086.5" y="736.8" width="14" height="303.7" fill="#4682b4" stroke="#3a6f9f" stroke-width="1"/>
<line x1="1093.5" y1="726.5" x2="1093.5" y2="736.78" stroke="#2f6696"/>
<rect x="1085.5" y="711.5" width="17" height="15" fill="#fff" stroke="#2f6696"/>
<text x="1093.0" y="722.5" text-anchor="middle" font-size="11" fill="#2f6696" font-family="Liberation Sans">14</text>
<rect x="1110.5" y="888.5" width="15" height="152.0" fill="#4682b4" stroke="#3a6f9f" stroke-width="1"/>
<line x1="1118.5" y1="878.5" x2="1118.5" y2="888.54" stroke="#2f6696"/>
<rect x="1112.5" y="863.5" width="11" height="15" fill="#fff" stroke="#2f6696"/>
<text x="1118.0" y="874.5" text-anchor="middle" font-size="11" fill="#2f6696" font-family="Liberation Sans">7</text>
<rect x="1135.5" y="888.5" width="14" height="152.0" fill="#4682b4" stroke="#3a6f9f" stroke-width="1"/>
<line x1="1142.5" y1="878.5" x2="1142.5" y2="888.54" stroke="#2f6696"/>
<rect x="1137.5" y="863.5" width="11" height="15" fill="#fff" stroke="#2f6696"/>
<text x="1142.0" y="874.5" text-anchor="middle" font-size="11" fill="#2f6696" font-family="Liberation Sans">7</text>
<rect x="1160.5" y="736.8" width="14" height="303.7" fill="#4682b4" stroke="#3a6f9f" stroke-width="1"/>
<line x1="1167.5" y1="726.5" x2="1167.5" y2="736.78" stroke="#2f6696"/>
<rect x="1158.5" y="711.5" width="17" height="15" fill="#fff" stroke="#2f6696"/>
<text x="1167.0" y="722.5" text-anchor="middle" font-size="11" fill="#2f6696" font-family="Liberation Sans">14</text>
<rect x="1184.5" y="888.5" width="15" height="152.0" fill="#4682b4" stroke="#3a6f9f" stroke-width="1"/>
<line x1="1191.5" y1="878.5" x2="1191.5" y2="888.54" stroke="#2f6696"/>
<rect x="1186.5" y="863.5" width="11" height="15" fill="#fff" stroke="#2f6696"/>
<text x="1191.0" y="874.5" text-anchor="middle" font-size="11" fill="#2f6696" font-family="Liberation Sans">7</text>
<rect x="1209.5" y="888.5" width="14" height="152.0" fill="#4682b4" stroke="#3a6f9f" stroke-width="1"/>
<line x1="1216.5" y1="878.5" x2="1216.5" y2="888.54" stroke="#2f6696"/>
<rect x="1211.5" y="863.5" width="11" height="15" fill="#fff" stroke="#2f6696"/>
<text x="1216.0" y="874.5" text-anchor="middle" font-size="11" fill="#2f6696" font-family="Liberation Sans">7</text>
<rect x="1233.5" y="736.8" width="15" height="303.7" fill="#4682b4" stroke="#3a6f9f" stroke-width="1"/>
<line x1="1241.5" y1="726.5" x2="1241.5" y2="736.78" stroke="#2f6696"/>
<rect x="1232.5" y="711.5" width="17" height="15" fill="#fff" stroke="#2f6696"/>
<text x="1241.0" y="722.5" text-anchor="middle" font-size="11" fill="#2f6696" font-family="Liberation Sans">14</text>
<rect x="1258.5" y="888.5" width="14" height="152.0" fill="#4682b4" stroke="#3a6f9f" stroke-width="1"/>
<line x1="1265.5" y1="878.5" x2="1265.5" y2="888.54" stroke="#2f6696"/>
<rect x="1260.5" y="863.5" width="11" height="15" fill="#fff" stroke="#2f6696"/>
<text x="1265.0" y="874.5" text-anchor="middle" font-size="11" fill="#2f6696" font-family="Liberation Sans">7</text>
<rect x="1283.5" y="736.8" width="14" height="303.7" fill="#4682b4" stroke="#3a6f9f" stroke-width="1"/>
<line x1="1290.5" y1="726.5" x2="1290.5" y2="736.78" stroke="#2f6696"/>
<rect x="1281.5" y="711.5" width="17" height="15" fill="#fff" stroke="#2f6696"/>
<text x="1290.0" y="722.5" text-anchor="middle" font-size="11" fill="#2f6696" font-family="Liberation Sans">14</text>
<rect x="1307.5" y="888.5" width="15" height="152.0" fill="#4682b4" stroke="#3a6f9f" stroke-width="1"/>
<line x1="1314.5" y1="878.5" x2="1314.5" y2="888.54" stroke="#2f6696"/>
<rect x="1309.5" y="863.5" width="11" height="15" fill="#fff" stroke="#2f6696"/>
<text x="1314.0" y="874.5" text-anchor="middle" font-size="11" fill="#2f6696" font-family="Liberation Sans">7</text>
<rect x="1332.5" y="736.8" width="14" height="303.7" fill="#4682b4" stroke="#3a6f9f" stroke-width="1"/>
<line x1="1339.5" y1="726.5" x2="1339.5" y2="736.78" stroke="#2f6696"/>
<rect x="1331.5" y="711.5" width="17" height="15" fill="#fff" stroke="#2f6696"/>
<text x="1339.0" y="722.5" text-anchor="middle" font-size="11" fill="#2f6696" font-family="Liberation Sans">14</text>
<rect x="1356.5" y="888.5" width="15" height="152.0" fill="#4682b4" stroke="#3a6f9f" stroke-width="1"/>
<line x1="1364.5" y1="878.5" x2="1364.5" y2="888.54" stroke="#2f6696"/>
<rect x="1358.5" y="863.5" width="11" height="15" fill="#fff" stroke="#2f6696"/>
<text x="1364.0" y="874.5" text-anchor="middle" font-size="11" fill="#2f6696" font-family="Liberation Sans">7</text>
<rect x="1381.5" y="736.8" width="14" height="303.7" fill="#4682b4" stroke="#3a6f9f" stroke-width="1"/>
<line x1="1388.5" y1="726.5" x2="1388.5" y2="736.78" stroke="#2f6696"/>
<rect x="1380.5" y="711.5" width="17" height="15" fill="#fff" stroke="#2f6696"/>
<text x="1388.0" y="722.5" text-anchor="middle" font-size="11" fill="#2f6696" font-family="Liberation Sans">14</text>
<rect x="1406.5" y="888.5" width="14" height="152.0" fill="#4682b4" stroke="#3a6f9f" stroke-width="1"/>
<line x1="1413.5" y1="878.5" x2="1413.5" y2="888.54" stroke="#2f6696"/>
<rect x="1407.5" y="863.5" width="11" height="15" fill="#fff" stroke="#2f6696"/>
<text x="1413.0" y="874.5" text-anchor="middle" font-size="11" fill="#2f6696" font-family="Liberation Sans">7</text>
<rect x="1430.5" y="888.5" width="15" height="152.0" fill="#4682b4" stroke="#3a6f9f" stroke-width="1"/>
<line x1="1437.5" y1="878.5" x2="1437.5" y2="888.54" stroke="#2f6696"/>
<rect x="1432.5" y="863.5" width="11" height="15" fill="#fff" stroke="#2f6696"/>
<text x="1437.0" y="874.5" text-anchor="middle" font-size="11" fill="#2f6696" font-family="Liberation Sans">7</text>
<rect x="1455.5" y="888.5" width="14" height="152.0" fill="#4682b4" stroke="#3a6f9f" stroke-width="1"/>
<line x1="1462.5" y1="878.5" x2="1462.5" y2="888.54" stroke="#2f6696"/>
<rect x="1457.5" y="863.5" width="11" height="15" fill="#fff" stroke="#2f6696"/>
<text x="1462.0" y="874.5" text-anchor="middle" font-size="11" fill="#2f6696" font-family="Liberation Sans">7</text>
<rect x="1479.5" y="888.5" width="15" height="152.0" fill="#4682b4" stroke="#3a6f9f" stroke-width="1"/>
<line x1="1487.5" y1="878.5" x2="1487.5" y2="888.54" stroke="#2f6696"/>
<rect x="1481.5" y="863.5" width="11" height="15" fill="#fff" stroke="#2f6696"/>
<text x="1487.0" y="874.5" text-anchor="middle" font-size="11" fill="#2f6696" font-family="Liberation Sans">7</text>
<rect x="1504.5" y="888.5" width="14" height="152.0" fill="#4682b4" stroke="#3a6f9f" stroke-width="1"/>
<line x1="1511.5" y1="878.5" x2="1511.5" y2="888.54" stroke="#2f6696"/>
<rect x="1506.5" y="863.5" width="11" height="15" fill="#fff" stroke="#2f6696"/>
<text x="1511.0" y="874.5" text-anchor="middle" font-size="11" fill="#2f6696" font-family="Liberation Sans">7</text>
<rect x="1529.5" y="888.5" width="14" height="152.0" fill="#4682b4" stroke="#3a6f9f" stroke-width="1"/>
<line x1="1536.5" y1="878.5" x2="1536.5" y2="888.54" stroke="#2f6696"/>
<rect x="1530.5" y="863.5" width="11" height="15" fill="#fff" stroke="#2f6696"/>
<text x="1536.0" y="874.5" text-anchor="middle" font-size="11" fill="#2f6696" font-family="Liberation Sans">7</text>
<rect x="1553.5" y="888.5" width="15" height="152.0" fill="#4682b4" stroke="#3a6f9f" stroke-width="1"/>
<line x1="1560.5" y1="878.5" x2="1560.5" y2="888.54" stroke="#2f6696"/>
<rect x="1555.5" y="863.5" width="11" height="15" fill="#fff" stroke="#2f6696"/>
<text x="1560.0" y="874.5" text-anchor="middle" font-size="11" fill="#2f6696" font-family="Liberation Sans">7</text>
<rect x="1602.5" y="888.5" width="15" height="152.0" fill="#4682b4" stroke="#3a6f9f" stroke-width="1"/>
<line x1="1610.5" y1="878.5" x2="1610.5" y2="888.54" stroke="#2f6696"/>
<rect x="1604.5" y="863.5" width="11" height="15" fill="#fff" stroke="#2f6696"/>
<text x="1610.0" y="874.5" text-anchor="middle" font-size="11" fill="#2f6696" font-family="Liberation Sans">7</text>
<rect x="1627.5" y="888.5" width="14" height="152.0" fill="#4682b4" stroke="#3a6f9f" stroke-width="1"/>
<line x1="1634.5" y1="878.5" x2="1634.5" y2="888.54" stroke="#2f6696"/>
<rect x="1629.5" y="863.5" width="11" height="15" fill="#fff" stroke="#2f6696"/>
<text x="1634.0" y="874.5" text-anchor="middle" font-size="11" fill="#2f6696" font-family="Liberation Sans">7</text>
<rect x="1652.5" y="888.5" width="14" height="152.0" fill="#4682b4" stroke="#3a6f9f" stroke-width="1"/>
<line x1="1659.5" y1="878.5" x2="1659.5" y2="888.54" stroke="#2f6696"/>
<rect x="1653.5" y="863.5" width="11" height="15" fill="#fff" stroke="#2f6696"/>
<text x="1659.0" y="874.5" text-anchor="middle" font-size="11" fill="#2f6696" font-family="Liberation Sans">7</text>
<rect x="1676.5" y="736.8" width="15" height="303.7" fill="#4682b4" stroke="#3a6f9f" stroke-width="1"/>
<line x1="1683.5" y1="726.5" x2="1683.5" y2="736.78" stroke="#2f6696"/>
<rect x="1675.5" y="711.5" width="17" height="15" fill="#fff" stroke="#2f6696"/>
<text x="1683.0" y="722.5" text-anchor="middle" font-size="11" fill="#2f6696" font-family="Liberation Sans">14</text>
<rect x="1701.5" y="888.5" width="14" height="152.0" fill="#4682b4" stroke="#3a6f9f" stroke-width="1"/>
<line x1="1708.5" y1="878.5" x2="1708.5" y2="888.54" stroke="#2f6696"/>
<rect x="1703.5" y="863.5" width="11" height="15" fill="#fff" stroke="#2f6696"/>
<text x="1708.0" y="874.5" text-anchor="middle" font-size="11" fill="#2f6696" font-family="Liberation Sans">7</text>
<rect x="1725.5" y="888.5" width="15" height="152.0" fill="#4682b4" stroke="#3a6f9f" stroke-width="1"/>
<line x1="1733.5" y1="878.5" x2="1733.5" y2="888.54" stroke="#2f6696"/>
<rect x="1727.5" y="863.5" width="11" height="15" fill="#fff" stroke="#2f6696"/>
<text x="1733.0" y="874.5" text-anchor="middle" font-size="11" fill="#2f6696" font-family="Liberation Sans">7</text>
<rect x="1750.5" y="888.5" width="14" height="152.0" fill="#4682b4" stroke="#3a6f9f" stroke-width="1"/>
<line x1="1757.5" y1="878.5" x2="1757.5" y2="888.54" stroke="#2f6696"/>
<rect x="1752.5" y="863.5" width="11" height="15" fill="#fff" stroke="#2f6696"/>
<text x="1757.0" y="874.5" text-anchor="middle" font-size="11" fill="#2f6696" font-family="Liberation Sans">7</text>
<rect x="1775.5" y="888.5" width="14" height="152.0" fill="#4682b4" stroke="#3a6f9f" stroke-width="1"/>
<line x1="1782.5" y1="878.5" x2="1782.5" y2="888.54" stroke="#2f6696"/>
<rect x="1776.5" y="863.5" width="11" height="15" fill="#fff" stroke="#2f6696"/>
<text x="1782.0" y="874.5" text-anchor="middle" font-size="11" fill="#2f6696" font-family="Liberation Sans">7</text>
<rect x="1799.5" y="888.5" width="15" height="152.0" fill="#4682b4" stroke="#3a6f9f" stroke-width="1"/>
<line x1="1806.5" y1="878.5" x2="1806.5" y2="888.54" stroke="#2f6696"/>
<rect x="1801.5" y="863.5" width="11" height="15" fill="#fff" stroke="#2f6696"/>
<text x="1806.0" y="874.5" text-anchor="middle" font-size="11" fill="#2f6696" font-family="Liberation Sans">7</text>
<rect x="1824.5" y="736.8" width="14" height="303.7" fill="#4682b4" stroke="#3a6f9f" stroke-width="1"/>
<line x1="1831.5" y1="726.5" x2="1831.5" y2="736.78" stroke="#2f6696"/>
<rect x="1823.5" y="711.5" width="17" height="15" fill="#fff" stroke="#2f6696"/>
<text x="1831.0" y="722.5" text-anchor="middle" font-size="11" fill="#2f6696" font-family="Liberation Sans">14</text>
<rect x="1848.5" y="888.5" width="15" height="152.0" fill="#4682b4" stroke="#3a6f9f" stroke-width="1"/>
<line x1="1856.5" y1="878.5" x2="1856.5" y2="888.54" stroke="#2f6696"/>
<rect x="1850.5" y="863.5" width="11" height="15" fill="#fff" stroke="#2f6696"/>
<text x="1856.0" y="874.5" text-anchor="middle" font-size="11" fill="#2f6696" font-family="Liberation Sans">7</text>
<path d="M705.5,705.5 L705.5,1040.5 L1899.5,1040.5" stroke="#a0a0a0" fill="none"/>
</svg>
</body></html>
